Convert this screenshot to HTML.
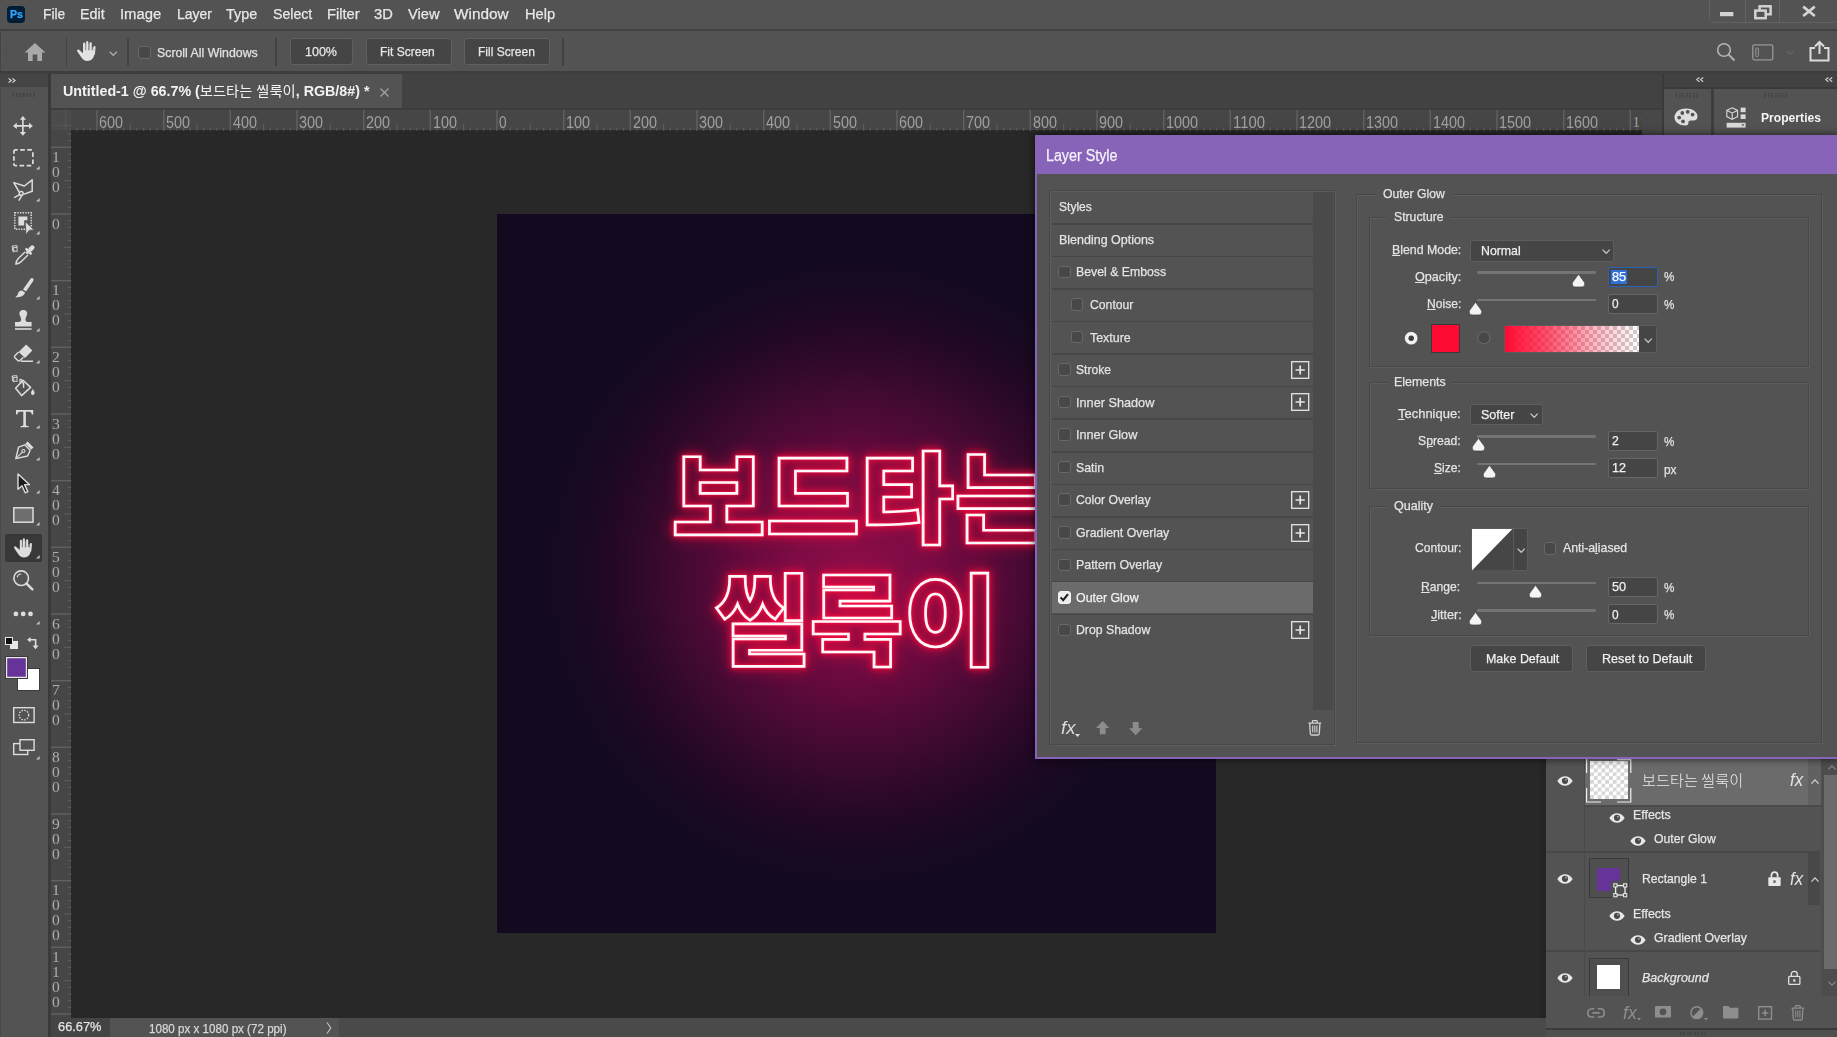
<!DOCTYPE html>
<html lang="en">
<head>
<meta charset="utf-8">
<title>Photoshop - Layer Style</title>
<style>
*{box-sizing:border-box;margin:0;padding:0}
html,body{width:1837px;height:1037px;overflow:hidden;background:#535353}
body{position:relative;font-family:"Liberation Sans","Noto Sans CJK KR",sans-serif;font-size:13px;color:#e0e0e0}
.abs{position:absolute}
.t{position:absolute;white-space:nowrap;transform-origin:0 50%;display:block;-webkit-text-stroke:0.25px currentColor}
svg{position:absolute;overflow:visible}
.btn{position:absolute;background:#454545;border:1px solid #606060;border-radius:3px}
.vsep{position:absolute;width:1px;background:#424242}
.cb{position:absolute;width:13px;height:13px;background:#484848;border:1px solid #686868;border-radius:3px}
.inp{position:absolute;background:#454545;border:1px solid #666;border-radius:2px}
.fs{position:absolute;border:1px solid #484848;box-shadow:1px 1px 0 #5d5d5d, inset 1px 1px 0 #5d5d5d}
.fsl{position:absolute;background:#535353;height:12px}
u{text-decoration:underline;text-underline-offset:1px}
</style>
</head>
<body>

<!-- p_top -->
<div class="abs" style="left:0px;top:0px;width:1837px;height:29px;background:#535353;"></div>
<div class="abs" style="left:0px;top:29px;width:1837px;height:2px;background:#414141;"></div>
<div class="abs" style="left:7px;top:6px;width:18px;height:17px;background:#001e36;border-radius:4px;"></div>
<span class="t" style="left:9.5px;top:7.10px;height:15px;line-height:15px;font-size:10.5px;font-weight:bold;color:#31a8ff;transform:scaleX(1.0122);">Ps</span>
<span class="t" style="left:43.3px;top:3.10px;height:22px;line-height:22px;font-size:15.5px;color:#e8e8e8;transform:scaleX(0.8886);">File</span>
<span class="t" style="left:80.3px;top:3.10px;height:22px;line-height:22px;font-size:15.5px;color:#e8e8e8;transform:scaleX(0.9244);">Edit</span>
<span class="t" style="left:120.3px;top:3.10px;height:22px;line-height:22px;font-size:15.5px;color:#e8e8e8;transform:scaleX(0.9561);">Image</span>
<span class="t" style="left:176.5px;top:3.10px;height:22px;line-height:22px;font-size:15.5px;color:#e8e8e8;transform:scaleX(0.9025);">Layer</span>
<span class="t" style="left:226.3px;top:3.10px;height:22px;line-height:22px;font-size:15.5px;color:#e8e8e8;transform:scaleX(0.9283);">Type</span>
<span class="t" style="left:273px;top:3.10px;height:22px;line-height:22px;font-size:15.5px;color:#e8e8e8;transform:scaleX(0.9120);">Select</span>
<span class="t" style="left:327px;top:3.10px;height:22px;line-height:22px;font-size:15.5px;color:#e8e8e8;transform:scaleX(0.9491);">Filter</span>
<span class="t" style="left:374px;top:3.10px;height:22px;line-height:22px;font-size:15.5px;color:#e8e8e8;transform:scaleX(0.9481);">3D</span>
<span class="t" style="left:408px;top:3.10px;height:22px;line-height:22px;font-size:15.5px;color:#e8e8e8;transform:scaleX(0.9451);">View</span>
<span class="t" style="left:454.2px;top:3.10px;height:22px;line-height:22px;font-size:15.5px;color:#e8e8e8;transform:scaleX(0.9902);">Window</span>
<span class="t" style="left:524.8px;top:3.10px;height:22px;line-height:22px;font-size:15.5px;color:#e8e8e8;transform:scaleX(0.9470);">Help</span>
<div class="abs" style="left:1709.4px;top:-2px;width:130px;height:25px;border:1px solid #626262;border-radius:0 0 6px 6px;"></div>
<div class="abs" style="left:1745px;top:0px;width:1px;height:22px;background:#626262;"></div>
<div class="abs" style="left:1778.6px;top:0px;width:1px;height:22px;background:#626262;"></div>
<svg style="left:1720.3px;top:12.3px;" width="13.4" height="4.2" viewBox="0 0 13.4 4.2"><rect width="13.4" height="4.2" fill="#d2d2d2"/></svg>
<svg style="left:1753.5px;top:4.5px;" width="18" height="14.6" viewBox="0 0 18 14.6"><rect x="5.6" y="1.3" width="11" height="8" fill="none" stroke="#d2d2d2" stroke-width="2.5"/><rect x="1.3" y="5.6" width="10.4" height="7.6" fill="#535353" stroke="#d2d2d2" stroke-width="2.5"/></svg>
<svg style="left:1802.4px;top:6.3px;" width="14" height="10.6" viewBox="0 0 14 10.6"><path d="M1.2 0.6 L12.8 10 M12.8 0.6 L1.2 10" stroke="#d2d2d2" stroke-width="2.7" fill="none"/></svg>
<div class="abs" style="left:0px;top:31px;width:1837px;height:41px;background:#535353;"></div>
<div class="abs" style="left:0px;top:31px;width:1px;height:41px;background:#444;"></div>
<div class="abs" style="left:0px;top:71px;width:1837px;height:3px;background:#3e3e3e;"></div>
<div class="abs" style="left:6px;top:39px;width:1px;height:24px;background:repeating-linear-gradient(#424242 0 1px,transparent 1px 3px);"></div>
<svg style="left:24px;top:42px;" width="22" height="20" viewBox="0 0 22 20"><path d="M11 1 L21.5 10.5 H18 V19 H13.3 V12.5 H8.7 V19 H4 V10.5 H0.5 Z" fill="#a9a9a9"/></svg>
<div class="vsep" style="left:65.5px;top:38px;height:28px;width:1.3px"></div>
<svg style="left:77px;top:41px;" width="18.3" height="20" viewBox="0 0 18.3 20"><g fill="#e2e2e2"><rect x="6.05" y="1.45" width="2.15" height="12" rx="1.07"/><rect x="9.15" y="0" width="2.15" height="12" rx="1.07"/><rect x="12.55" y="1.15" width="2.15" height="12" rx="1.07"/><rect x="15.85" y="5" width="2.2" height="9" rx="1.1" transform="rotate(5 16.9 12)"/><path d="M1.7 8.6 L6.05 12.2 V9.3 H17.7 L17.2 13.8 C16.8 17.6 14 19.9 10.6 19.9 C7.6 19.9 5.8 18.4 4.3 16.2 L0.3 10.4 C-0.4 9 0.8 7.9 1.7 8.6 Z"/></g><g fill="#e2e2e2" opacity=".42"><rect x="8.2" y="3" width="0.95" height="6.4"/><rect x="11.3" y="3" width="1.25" height="6.4"/><rect x="14.7" y="6.2" width="1.2" height="3.2"/></g></svg>
<svg style="left:109px;top:51px;" width="9" height="6" viewBox="0 0 9 6"><path d="M0.7 0.7 L4.3 4.3 L7.9 0.7" stroke="#ababab" stroke-width="1.3" fill="none"/></svg>
<div class="vsep" style="left:127.3px;top:38px;height:28px;width:1.3px"></div>
<div class="cb" style="left:138px;top:46px"></div>
<span class="t" style="left:156.5px;top:43.90px;height:18px;line-height:18px;font-size:13px;color:#e2e2e2;transform:scaleX(0.9482);">Scroll All Windows</span>
<div class="vsep" style="left:275.3px;top:38px;height:28px;width:1.3px"></div>
<div class="btn" style="left:290px;top:38px;width:62.5px;height:27px"></div>
<span class="t" style="left:305px;top:43.00px;height:18px;line-height:18px;font-size:13px;color:#e6e6e6;transform:scaleX(0.9624);">100%</span>
<div class="btn" style="left:366px;top:38px;width:85.5px;height:27px"></div>
<span class="t" style="left:380.2px;top:43.00px;height:18px;line-height:18px;font-size:13px;color:#e6e6e6;transform:scaleX(0.9249);">Fit Screen</span>
<div class="btn" style="left:464px;top:38px;width:86px;height:27px"></div>
<span class="t" style="left:478.3px;top:43.00px;height:18px;line-height:18px;font-size:13px;color:#e6e6e6;transform:scaleX(0.9280);">Fill Screen</span>
<div class="vsep" style="left:562.3px;top:38px;height:28px;width:1.3px"></div>
<svg style="left:1716px;top:42px;" width="20" height="20" viewBox="0 0 20 20"><circle cx="8" cy="8" r="6.3" fill="none" stroke="#b4b4b4" stroke-width="1.6"/><path d="M12.6 12.6 L18.5 18.5" stroke="#b4b4b4" stroke-width="1.8"/></svg>
<svg style="left:1752px;top:44px;" width="22" height="17" viewBox="0 0 22 17"><rect x="0.8" y="0.8" width="20" height="15" rx="1.5" fill="none" stroke="#989898" stroke-width="1.3"/><rect x="3.8" y="4" width="2.6" height="8.6" rx="1" fill="none" stroke="#989898" stroke-width="1"/></svg>
<svg style="left:1786px;top:50px;" width="9" height="6" viewBox="0 0 9 6"><path d="M0.7 0.7 L4.3 4.3 L7.9 0.7" stroke="#666" stroke-width="1.3" fill="none"/></svg>
<svg style="left:1809px;top:40px;" width="22" height="22" viewBox="0 0 22 22"><path d="M6 8 H1.5 V20.5 H19.5 V8 H15" fill="none" stroke="#dcdcdc" stroke-width="2"/><path d="M10.5 14 V2.5 M6 6.5 L10.5 2 L15 6.5" fill="none" stroke="#dcdcdc" stroke-width="2"/></svg>
<!-- p_doc -->
<div class="abs" style="left:48px;top:74px;width:1616px;height:35px;background:#424242;"></div>
<div class="abs" style="left:50px;top:74px;width:352px;height:34.5px;background:#535353;"></div>
<span class="t" style="left:63.4px;top:81.20px;height:20px;line-height:20px;font-size:14px;font-weight:bold;color:#f2f2f2;transform:scaleX(1.0194);-webkit-text-stroke:0;">Untitled-1 @ 66.7% (<span style="font-weight:400">보드타는 씰룩이</span>, RGB/8#) *</span>
<svg style="left:380px;top:87.5px;" width="9" height="9" viewBox="0 0 9 9"><path d="M0.5 0.5 L8.5 8.5 M8.5 0.5 L0.5 8.5" stroke="#a8a8a8" stroke-width="1.1" fill="none"/></svg>
<div class="abs" style="left:71px;top:130.4px;width:1571px;height:888px;background:#282828;"></div>
<div class="abs" id="art" style="left:496.8px;top:213.7px;width:719.7px;height:719.6px;overflow:hidden;background:radial-gradient(circle at 50% 50%,#8e0d48 0px,#7e0c45 60px,#6a0a3e 107px,#500a37 150px,#3f0a30 185px,#300929 215px,#250826 242px,#1b0921 270px,#160a20 292px,#140a20 312px)"><div id="neon" style="position:absolute;left:0;top:0;width:720px;height:720px;filter:drop-shadow(0 0 1.2px #ff1245) drop-shadow(0 0 3px #ff0a3e) drop-shadow(0 0 7px rgba(255,10,60,.6))"><span class="nl" style="left:174.6px;top:208.6px">보드타는</span><span class="nl" style="left:218.3px;top:330px">씰룩이</span></div></div><style>.nl{position:absolute;white-space:nowrap;font-family:"Noto Sans CJK KR",sans-serif;font-weight:900;font-size:102.5px;line-height:140px;height:140px;transform:scaleY(.97);transform-origin:0 50%;color:transparent;-webkit-text-stroke:2.7px #fff8fa;letter-spacing:0px}</style>
<div class="abs" style="left:50px;top:109.6px;width:1612px;height:20.8px;background:#464646;"></div>
<div class="abs" style="left:50px;top:108.4px;width:1612px;height:1.3px;background:#3d3d3d;"></div>
<div class="abs" style="left:1642px;top:109.6px;width:20px;height:909px;background:#484848;"></div>
<svg style="left:0px;top:109.6px;" width="1642" height="21" viewBox="0 0 1642 21"><g fill="#616161"><rect x="76.5" y="17.6" width="1" height="3.2"/><rect x="83.2" y="17.6" width="1" height="3.2"/><rect x="89.8" y="17.6" width="1" height="3.2"/><rect x="96.3" y="0" width="1.4" height="20.8"/><rect x="103.2" y="17.6" width="1" height="3.2"/><rect x="109.8" y="17.6" width="1" height="3.2"/><rect x="116.5" y="17.6" width="1" height="3.2"/><rect x="123.2" y="17.6" width="1" height="3.2"/><rect x="129.8" y="14" width="1" height="6.8"/><rect x="136.5" y="17.6" width="1" height="3.2"/><rect x="143.2" y="17.6" width="1" height="3.2"/><rect x="149.8" y="17.6" width="1" height="3.2"/><rect x="156.5" y="17.6" width="1" height="3.2"/><rect x="163.0" y="0" width="1.4" height="20.8"/><rect x="169.8" y="17.6" width="1" height="3.2"/><rect x="176.5" y="17.6" width="1" height="3.2"/><rect x="183.2" y="17.6" width="1" height="3.2"/><rect x="189.8" y="17.6" width="1" height="3.2"/><rect x="196.5" y="14" width="1" height="6.8"/><rect x="203.2" y="17.6" width="1" height="3.2"/><rect x="209.8" y="17.6" width="1" height="3.2"/><rect x="216.5" y="17.6" width="1" height="3.2"/><rect x="223.2" y="17.6" width="1" height="3.2"/><rect x="229.6" y="0" width="1.4" height="20.8"/><rect x="236.5" y="17.6" width="1" height="3.2"/><rect x="243.2" y="17.6" width="1" height="3.2"/><rect x="249.8" y="17.6" width="1" height="3.2"/><rect x="256.5" y="17.6" width="1" height="3.2"/><rect x="263.2" y="14" width="1" height="6.8"/><rect x="269.8" y="17.6" width="1" height="3.2"/><rect x="276.5" y="17.6" width="1" height="3.2"/><rect x="283.2" y="17.6" width="1" height="3.2"/><rect x="289.8" y="17.6" width="1" height="3.2"/><rect x="296.3" y="0" width="1.4" height="20.8"/><rect x="303.2" y="17.6" width="1" height="3.2"/><rect x="309.8" y="17.6" width="1" height="3.2"/><rect x="316.5" y="17.6" width="1" height="3.2"/><rect x="323.2" y="17.6" width="1" height="3.2"/><rect x="329.8" y="14" width="1" height="6.8"/><rect x="336.5" y="17.6" width="1" height="3.2"/><rect x="343.2" y="17.6" width="1" height="3.2"/><rect x="349.8" y="17.6" width="1" height="3.2"/><rect x="356.5" y="17.6" width="1" height="3.2"/><rect x="363.0" y="0" width="1.4" height="20.8"/><rect x="369.8" y="17.6" width="1" height="3.2"/><rect x="376.5" y="17.6" width="1" height="3.2"/><rect x="383.2" y="17.6" width="1" height="3.2"/><rect x="389.8" y="17.6" width="1" height="3.2"/><rect x="396.5" y="14" width="1" height="6.8"/><rect x="403.2" y="17.6" width="1" height="3.2"/><rect x="409.8" y="17.6" width="1" height="3.2"/><rect x="416.5" y="17.6" width="1" height="3.2"/><rect x="423.2" y="17.6" width="1" height="3.2"/><rect x="429.6" y="0" width="1.4" height="20.8"/><rect x="436.5" y="17.6" width="1" height="3.2"/><rect x="443.2" y="17.6" width="1" height="3.2"/><rect x="449.8" y="17.6" width="1" height="3.2"/><rect x="456.5" y="17.6" width="1" height="3.2"/><rect x="463.2" y="14" width="1" height="6.8"/><rect x="469.8" y="17.6" width="1" height="3.2"/><rect x="476.5" y="17.6" width="1" height="3.2"/><rect x="483.2" y="17.6" width="1" height="3.2"/><rect x="489.8" y="17.6" width="1" height="3.2"/><rect x="496.3" y="0" width="1.4" height="20.8"/><rect x="503.2" y="17.6" width="1" height="3.2"/><rect x="509.8" y="17.6" width="1" height="3.2"/><rect x="516.5" y="17.6" width="1" height="3.2"/><rect x="523.2" y="17.6" width="1" height="3.2"/><rect x="529.8" y="14" width="1" height="6.8"/><rect x="536.5" y="17.6" width="1" height="3.2"/><rect x="543.2" y="17.6" width="1" height="3.2"/><rect x="549.8" y="17.6" width="1" height="3.2"/><rect x="556.5" y="17.6" width="1" height="3.2"/><rect x="563.0" y="0" width="1.4" height="20.8"/><rect x="569.8" y="17.6" width="1" height="3.2"/><rect x="576.5" y="17.6" width="1" height="3.2"/><rect x="583.2" y="17.6" width="1" height="3.2"/><rect x="589.8" y="17.6" width="1" height="3.2"/><rect x="596.5" y="14" width="1" height="6.8"/><rect x="603.2" y="17.6" width="1" height="3.2"/><rect x="609.8" y="17.6" width="1" height="3.2"/><rect x="616.5" y="17.6" width="1" height="3.2"/><rect x="623.2" y="17.6" width="1" height="3.2"/><rect x="629.6" y="0" width="1.4" height="20.8"/><rect x="636.5" y="17.6" width="1" height="3.2"/><rect x="643.2" y="17.6" width="1" height="3.2"/><rect x="649.8" y="17.6" width="1" height="3.2"/><rect x="656.5" y="17.6" width="1" height="3.2"/><rect x="663.2" y="14" width="1" height="6.8"/><rect x="669.8" y="17.6" width="1" height="3.2"/><rect x="676.5" y="17.6" width="1" height="3.2"/><rect x="683.2" y="17.6" width="1" height="3.2"/><rect x="689.8" y="17.6" width="1" height="3.2"/><rect x="696.3" y="0" width="1.4" height="20.8"/><rect x="703.2" y="17.6" width="1" height="3.2"/><rect x="709.8" y="17.6" width="1" height="3.2"/><rect x="716.5" y="17.6" width="1" height="3.2"/><rect x="723.2" y="17.6" width="1" height="3.2"/><rect x="729.8" y="14" width="1" height="6.8"/><rect x="736.5" y="17.6" width="1" height="3.2"/><rect x="743.2" y="17.6" width="1" height="3.2"/><rect x="749.8" y="17.6" width="1" height="3.2"/><rect x="756.5" y="17.6" width="1" height="3.2"/><rect x="763.0" y="0" width="1.4" height="20.8"/><rect x="769.8" y="17.6" width="1" height="3.2"/><rect x="776.5" y="17.6" width="1" height="3.2"/><rect x="783.2" y="17.6" width="1" height="3.2"/><rect x="789.8" y="17.6" width="1" height="3.2"/><rect x="796.5" y="14" width="1" height="6.8"/><rect x="803.2" y="17.6" width="1" height="3.2"/><rect x="809.8" y="17.6" width="1" height="3.2"/><rect x="816.5" y="17.6" width="1" height="3.2"/><rect x="823.2" y="17.6" width="1" height="3.2"/><rect x="829.6" y="0" width="1.4" height="20.8"/><rect x="836.5" y="17.6" width="1" height="3.2"/><rect x="843.2" y="17.6" width="1" height="3.2"/><rect x="849.8" y="17.6" width="1" height="3.2"/><rect x="856.5" y="17.6" width="1" height="3.2"/><rect x="863.2" y="14" width="1" height="6.8"/><rect x="869.8" y="17.6" width="1" height="3.2"/><rect x="876.5" y="17.6" width="1" height="3.2"/><rect x="883.2" y="17.6" width="1" height="3.2"/><rect x="889.8" y="17.6" width="1" height="3.2"/><rect x="896.3" y="0" width="1.4" height="20.8"/><rect x="903.2" y="17.6" width="1" height="3.2"/><rect x="909.8" y="17.6" width="1" height="3.2"/><rect x="916.5" y="17.6" width="1" height="3.2"/><rect x="923.2" y="17.6" width="1" height="3.2"/><rect x="929.8" y="14" width="1" height="6.8"/><rect x="936.5" y="17.6" width="1" height="3.2"/><rect x="943.2" y="17.6" width="1" height="3.2"/><rect x="949.8" y="17.6" width="1" height="3.2"/><rect x="956.5" y="17.6" width="1" height="3.2"/><rect x="963.0" y="0" width="1.4" height="20.8"/><rect x="969.8" y="17.6" width="1" height="3.2"/><rect x="976.5" y="17.6" width="1" height="3.2"/><rect x="983.2" y="17.6" width="1" height="3.2"/><rect x="989.8" y="17.6" width="1" height="3.2"/><rect x="996.5" y="14" width="1" height="6.8"/><rect x="1003.2" y="17.6" width="1" height="3.2"/><rect x="1009.8" y="17.6" width="1" height="3.2"/><rect x="1016.5" y="17.6" width="1" height="3.2"/><rect x="1023.2" y="17.6" width="1" height="3.2"/><rect x="1029.6" y="0" width="1.4" height="20.8"/><rect x="1036.5" y="17.6" width="1" height="3.2"/><rect x="1043.2" y="17.6" width="1" height="3.2"/><rect x="1049.8" y="17.6" width="1" height="3.2"/><rect x="1056.5" y="17.6" width="1" height="3.2"/><rect x="1063.2" y="14" width="1" height="6.8"/><rect x="1069.8" y="17.6" width="1" height="3.2"/><rect x="1076.5" y="17.6" width="1" height="3.2"/><rect x="1083.2" y="17.6" width="1" height="3.2"/><rect x="1089.8" y="17.6" width="1" height="3.2"/><rect x="1096.3" y="0" width="1.4" height="20.8"/><rect x="1103.2" y="17.6" width="1" height="3.2"/><rect x="1109.8" y="17.6" width="1" height="3.2"/><rect x="1116.5" y="17.6" width="1" height="3.2"/><rect x="1123.2" y="17.6" width="1" height="3.2"/><rect x="1129.8" y="14" width="1" height="6.8"/><rect x="1136.5" y="17.6" width="1" height="3.2"/><rect x="1143.2" y="17.6" width="1" height="3.2"/><rect x="1149.8" y="17.6" width="1" height="3.2"/><rect x="1156.5" y="17.6" width="1" height="3.2"/><rect x="1163.0" y="0" width="1.4" height="20.8"/><rect x="1169.8" y="17.6" width="1" height="3.2"/><rect x="1176.5" y="17.6" width="1" height="3.2"/><rect x="1183.2" y="17.6" width="1" height="3.2"/><rect x="1189.8" y="17.6" width="1" height="3.2"/><rect x="1196.5" y="14" width="1" height="6.8"/><rect x="1203.2" y="17.6" width="1" height="3.2"/><rect x="1209.8" y="17.6" width="1" height="3.2"/><rect x="1216.5" y="17.6" width="1" height="3.2"/><rect x="1223.2" y="17.6" width="1" height="3.2"/><rect x="1229.6" y="0" width="1.4" height="20.8"/><rect x="1236.5" y="17.6" width="1" height="3.2"/><rect x="1243.2" y="17.6" width="1" height="3.2"/><rect x="1249.8" y="17.6" width="1" height="3.2"/><rect x="1256.5" y="17.6" width="1" height="3.2"/><rect x="1263.2" y="14" width="1" height="6.8"/><rect x="1269.8" y="17.6" width="1" height="3.2"/><rect x="1276.5" y="17.6" width="1" height="3.2"/><rect x="1283.2" y="17.6" width="1" height="3.2"/><rect x="1289.8" y="17.6" width="1" height="3.2"/><rect x="1296.3" y="0" width="1.4" height="20.8"/><rect x="1303.2" y="17.6" width="1" height="3.2"/><rect x="1309.8" y="17.6" width="1" height="3.2"/><rect x="1316.5" y="17.6" width="1" height="3.2"/><rect x="1323.2" y="17.6" width="1" height="3.2"/><rect x="1329.8" y="14" width="1" height="6.8"/><rect x="1336.5" y="17.6" width="1" height="3.2"/><rect x="1343.2" y="17.6" width="1" height="3.2"/><rect x="1349.8" y="17.6" width="1" height="3.2"/><rect x="1356.5" y="17.6" width="1" height="3.2"/><rect x="1363.0" y="0" width="1.4" height="20.8"/><rect x="1369.8" y="17.6" width="1" height="3.2"/><rect x="1376.5" y="17.6" width="1" height="3.2"/><rect x="1383.2" y="17.6" width="1" height="3.2"/><rect x="1389.8" y="17.6" width="1" height="3.2"/><rect x="1396.5" y="14" width="1" height="6.8"/><rect x="1403.2" y="17.6" width="1" height="3.2"/><rect x="1409.8" y="17.6" width="1" height="3.2"/><rect x="1416.5" y="17.6" width="1" height="3.2"/><rect x="1423.2" y="17.6" width="1" height="3.2"/><rect x="1429.6" y="0" width="1.4" height="20.8"/><rect x="1436.5" y="17.6" width="1" height="3.2"/><rect x="1443.2" y="17.6" width="1" height="3.2"/><rect x="1449.8" y="17.6" width="1" height="3.2"/><rect x="1456.5" y="17.6" width="1" height="3.2"/><rect x="1463.2" y="14" width="1" height="6.8"/><rect x="1469.8" y="17.6" width="1" height="3.2"/><rect x="1476.5" y="17.6" width="1" height="3.2"/><rect x="1483.2" y="17.6" width="1" height="3.2"/><rect x="1489.8" y="17.6" width="1" height="3.2"/><rect x="1496.3" y="0" width="1.4" height="20.8"/><rect x="1503.2" y="17.6" width="1" height="3.2"/><rect x="1509.8" y="17.6" width="1" height="3.2"/><rect x="1516.5" y="17.6" width="1" height="3.2"/><rect x="1523.2" y="17.6" width="1" height="3.2"/><rect x="1529.8" y="14" width="1" height="6.8"/><rect x="1536.5" y="17.6" width="1" height="3.2"/><rect x="1543.2" y="17.6" width="1" height="3.2"/><rect x="1549.8" y="17.6" width="1" height="3.2"/><rect x="1556.5" y="17.6" width="1" height="3.2"/><rect x="1563.0" y="0" width="1.4" height="20.8"/><rect x="1569.8" y="17.6" width="1" height="3.2"/><rect x="1576.5" y="17.6" width="1" height="3.2"/><rect x="1583.2" y="17.6" width="1" height="3.2"/><rect x="1589.8" y="17.6" width="1" height="3.2"/><rect x="1596.5" y="14" width="1" height="6.8"/><rect x="1603.2" y="17.6" width="1" height="3.2"/><rect x="1609.8" y="17.6" width="1" height="3.2"/><rect x="1616.5" y="17.6" width="1" height="3.2"/><rect x="1623.2" y="17.6" width="1" height="3.2"/><rect x="1629.6" y="0" width="1.4" height="20.8"/><rect x="1636.5" y="17.6" width="1" height="3.2"/></g></svg>
<span class="t" style="left:99.39979999999994px;top:112.10px;height:22px;line-height:22px;font-size:16px;color:#a0a0a0;transform:scaleX(0.8988);-webkit-text-stroke:0;">600</span>
<span class="t" style="left:166.0665px;top:112.10px;height:22px;line-height:22px;font-size:16px;color:#a0a0a0;transform:scaleX(0.8988);-webkit-text-stroke:0;">500</span>
<span class="t" style="left:232.73319999999998px;top:112.10px;height:22px;line-height:22px;font-size:16px;color:#a0a0a0;transform:scaleX(0.8988);-webkit-text-stroke:0;">400</span>
<span class="t" style="left:299.39989999999995px;top:112.10px;height:22px;line-height:22px;font-size:16px;color:#a0a0a0;transform:scaleX(0.8988);-webkit-text-stroke:0;">300</span>
<span class="t" style="left:366.0666px;top:112.10px;height:22px;line-height:22px;font-size:16px;color:#a0a0a0;transform:scaleX(0.8988);-webkit-text-stroke:0;">200</span>
<span class="t" style="left:432.7333px;top:112.10px;height:22px;line-height:22px;font-size:16px;color:#a0a0a0;transform:scaleX(0.8988);-webkit-text-stroke:0;">100</span>
<span class="t" style="left:499.4px;top:112.10px;height:22px;line-height:22px;font-size:16px;color:#a0a0a0;transform:scaleX(0.8533);-webkit-text-stroke:0;">0</span>
<span class="t" style="left:566.0667px;top:112.10px;height:22px;line-height:22px;font-size:16px;color:#a0a0a0;transform:scaleX(0.8988);-webkit-text-stroke:0;">100</span>
<span class="t" style="left:632.7334px;top:112.10px;height:22px;line-height:22px;font-size:16px;color:#a0a0a0;transform:scaleX(0.8988);-webkit-text-stroke:0;">200</span>
<span class="t" style="left:699.4001px;top:112.10px;height:22px;line-height:22px;font-size:16px;color:#a0a0a0;transform:scaleX(0.8988);-webkit-text-stroke:0;">300</span>
<span class="t" style="left:766.0668px;top:112.10px;height:22px;line-height:22px;font-size:16px;color:#a0a0a0;transform:scaleX(0.8988);-webkit-text-stroke:0;">400</span>
<span class="t" style="left:832.7334999999999px;top:112.10px;height:22px;line-height:22px;font-size:16px;color:#a0a0a0;transform:scaleX(0.8988);-webkit-text-stroke:0;">500</span>
<span class="t" style="left:899.4002px;top:112.10px;height:22px;line-height:22px;font-size:16px;color:#a0a0a0;transform:scaleX(0.8988);-webkit-text-stroke:0;">600</span>
<span class="t" style="left:966.0669px;top:112.10px;height:22px;line-height:22px;font-size:16px;color:#a0a0a0;transform:scaleX(0.8988);-webkit-text-stroke:0;">700</span>
<span class="t" style="left:1032.7336px;top:112.10px;height:22px;line-height:22px;font-size:16px;color:#a0a0a0;transform:scaleX(0.8988);-webkit-text-stroke:0;">800</span>
<span class="t" style="left:1099.4003000000002px;top:112.10px;height:22px;line-height:22px;font-size:16px;color:#a0a0a0;transform:scaleX(0.8988);-webkit-text-stroke:0;">900</span>
<span class="t" style="left:1166.067px;top:112.10px;height:22px;line-height:22px;font-size:16px;color:#a0a0a0;transform:scaleX(0.8990);-webkit-text-stroke:0;">1000</span>
<span class="t" style="left:1232.7337000000002px;top:112.10px;height:22px;line-height:22px;font-size:16px;color:#a0a0a0;transform:scaleX(0.9301);-webkit-text-stroke:0;">1100</span>
<span class="t" style="left:1299.4004000000002px;top:112.10px;height:22px;line-height:22px;font-size:16px;color:#a0a0a0;transform:scaleX(0.8990);-webkit-text-stroke:0;">1200</span>
<span class="t" style="left:1366.0671000000002px;top:112.10px;height:22px;line-height:22px;font-size:16px;color:#a0a0a0;transform:scaleX(0.8990);-webkit-text-stroke:0;">1300</span>
<span class="t" style="left:1432.7338000000002px;top:112.10px;height:22px;line-height:22px;font-size:16px;color:#a0a0a0;transform:scaleX(0.8990);-webkit-text-stroke:0;">1400</span>
<span class="t" style="left:1499.4005000000002px;top:112.10px;height:22px;line-height:22px;font-size:16px;color:#a0a0a0;transform:scaleX(0.8990);-webkit-text-stroke:0;">1500</span>
<span class="t" style="left:1566.0672000000002px;top:112.10px;height:22px;line-height:22px;font-size:16px;color:#a0a0a0;transform:scaleX(0.8990);-webkit-text-stroke:0;">1600</span>
<div class="abs" style="left:1631.3339px;top:110px;width:10px;height:20px;overflow:hidden;"><span class="t" style="left:1.2px;top:2.10px;height:21px;line-height:21px;font-size:15px;font-family:'Liberation Serif',serif;color:#a0a0a0;-webkit-text-stroke:0;">1700</span></div>
<div class="abs" style="left:50px;top:109.6px;width:21.2px;height:909px;background:#464646;"></div>
<svg style="left:50px;top:-0.3px;" width="22" height="1018" viewBox="0 0 22 1018"><g fill="#616161"><rect y="133.5" x="18" height="1" width="3.2"/><rect y="140.2" x="18" height="1" width="3.2"/><rect y="146.6" x="0" height="1.4" width="21.2"/><rect y="153.5" x="18" height="1" width="3.2"/><rect y="160.2" x="18" height="1" width="3.2"/><rect y="166.8" x="18" height="1" width="3.2"/><rect y="173.5" x="18" height="1" width="3.2"/><rect y="180.2" x="14" height="1" width="7.2"/><rect y="186.8" x="18" height="1" width="3.2"/><rect y="193.5" x="18" height="1" width="3.2"/><rect y="200.2" x="18" height="1" width="3.2"/><rect y="206.8" x="18" height="1" width="3.2"/><rect y="213.3" x="0" height="1.4" width="21.2"/><rect y="220.2" x="18" height="1" width="3.2"/><rect y="226.8" x="18" height="1" width="3.2"/><rect y="233.5" x="18" height="1" width="3.2"/><rect y="240.2" x="18" height="1" width="3.2"/><rect y="246.8" x="14" height="1" width="7.2"/><rect y="253.5" x="18" height="1" width="3.2"/><rect y="260.2" x="18" height="1" width="3.2"/><rect y="266.8" x="18" height="1" width="3.2"/><rect y="273.5" x="18" height="1" width="3.2"/><rect y="280.0" x="0" height="1.4" width="21.2"/><rect y="286.8" x="18" height="1" width="3.2"/><rect y="293.5" x="18" height="1" width="3.2"/><rect y="300.2" x="18" height="1" width="3.2"/><rect y="306.8" x="18" height="1" width="3.2"/><rect y="313.5" x="14" height="1" width="7.2"/><rect y="320.2" x="18" height="1" width="3.2"/><rect y="326.8" x="18" height="1" width="3.2"/><rect y="333.5" x="18" height="1" width="3.2"/><rect y="340.2" x="18" height="1" width="3.2"/><rect y="346.6" x="0" height="1.4" width="21.2"/><rect y="353.5" x="18" height="1" width="3.2"/><rect y="360.2" x="18" height="1" width="3.2"/><rect y="366.8" x="18" height="1" width="3.2"/><rect y="373.5" x="18" height="1" width="3.2"/><rect y="380.2" x="14" height="1" width="7.2"/><rect y="386.8" x="18" height="1" width="3.2"/><rect y="393.5" x="18" height="1" width="3.2"/><rect y="400.2" x="18" height="1" width="3.2"/><rect y="406.8" x="18" height="1" width="3.2"/><rect y="413.3" x="0" height="1.4" width="21.2"/><rect y="420.2" x="18" height="1" width="3.2"/><rect y="426.8" x="18" height="1" width="3.2"/><rect y="433.5" x="18" height="1" width="3.2"/><rect y="440.2" x="18" height="1" width="3.2"/><rect y="446.8" x="14" height="1" width="7.2"/><rect y="453.5" x="18" height="1" width="3.2"/><rect y="460.2" x="18" height="1" width="3.2"/><rect y="466.8" x="18" height="1" width="3.2"/><rect y="473.5" x="18" height="1" width="3.2"/><rect y="480.0" x="0" height="1.4" width="21.2"/><rect y="486.8" x="18" height="1" width="3.2"/><rect y="493.5" x="18" height="1" width="3.2"/><rect y="500.2" x="18" height="1" width="3.2"/><rect y="506.8" x="18" height="1" width="3.2"/><rect y="513.5" x="14" height="1" width="7.2"/><rect y="520.2" x="18" height="1" width="3.2"/><rect y="526.8" x="18" height="1" width="3.2"/><rect y="533.5" x="18" height="1" width="3.2"/><rect y="540.2" x="18" height="1" width="3.2"/><rect y="546.6" x="0" height="1.4" width="21.2"/><rect y="553.5" x="18" height="1" width="3.2"/><rect y="560.2" x="18" height="1" width="3.2"/><rect y="566.8" x="18" height="1" width="3.2"/><rect y="573.5" x="18" height="1" width="3.2"/><rect y="580.2" x="14" height="1" width="7.2"/><rect y="586.8" x="18" height="1" width="3.2"/><rect y="593.5" x="18" height="1" width="3.2"/><rect y="600.2" x="18" height="1" width="3.2"/><rect y="606.8" x="18" height="1" width="3.2"/><rect y="613.3" x="0" height="1.4" width="21.2"/><rect y="620.2" x="18" height="1" width="3.2"/><rect y="626.8" x="18" height="1" width="3.2"/><rect y="633.5" x="18" height="1" width="3.2"/><rect y="640.2" x="18" height="1" width="3.2"/><rect y="646.8" x="14" height="1" width="7.2"/><rect y="653.5" x="18" height="1" width="3.2"/><rect y="660.2" x="18" height="1" width="3.2"/><rect y="666.8" x="18" height="1" width="3.2"/><rect y="673.5" x="18" height="1" width="3.2"/><rect y="680.0" x="0" height="1.4" width="21.2"/><rect y="686.8" x="18" height="1" width="3.2"/><rect y="693.5" x="18" height="1" width="3.2"/><rect y="700.2" x="18" height="1" width="3.2"/><rect y="706.8" x="18" height="1" width="3.2"/><rect y="713.5" x="14" height="1" width="7.2"/><rect y="720.2" x="18" height="1" width="3.2"/><rect y="726.8" x="18" height="1" width="3.2"/><rect y="733.5" x="18" height="1" width="3.2"/><rect y="740.2" x="18" height="1" width="3.2"/><rect y="746.6" x="0" height="1.4" width="21.2"/><rect y="753.5" x="18" height="1" width="3.2"/><rect y="760.2" x="18" height="1" width="3.2"/><rect y="766.8" x="18" height="1" width="3.2"/><rect y="773.5" x="18" height="1" width="3.2"/><rect y="780.2" x="14" height="1" width="7.2"/><rect y="786.8" x="18" height="1" width="3.2"/><rect y="793.5" x="18" height="1" width="3.2"/><rect y="800.2" x="18" height="1" width="3.2"/><rect y="806.8" x="18" height="1" width="3.2"/><rect y="813.3" x="0" height="1.4" width="21.2"/><rect y="820.2" x="18" height="1" width="3.2"/><rect y="826.8" x="18" height="1" width="3.2"/><rect y="833.5" x="18" height="1" width="3.2"/><rect y="840.2" x="18" height="1" width="3.2"/><rect y="846.8" x="14" height="1" width="7.2"/><rect y="853.5" x="18" height="1" width="3.2"/><rect y="860.2" x="18" height="1" width="3.2"/><rect y="866.8" x="18" height="1" width="3.2"/><rect y="873.5" x="18" height="1" width="3.2"/><rect y="880.0" x="0" height="1.4" width="21.2"/><rect y="886.8" x="18" height="1" width="3.2"/><rect y="893.5" x="18" height="1" width="3.2"/><rect y="900.2" x="18" height="1" width="3.2"/><rect y="906.8" x="18" height="1" width="3.2"/><rect y="913.5" x="14" height="1" width="7.2"/><rect y="920.2" x="18" height="1" width="3.2"/><rect y="926.8" x="18" height="1" width="3.2"/><rect y="933.5" x="18" height="1" width="3.2"/><rect y="940.2" x="18" height="1" width="3.2"/><rect y="946.6" x="0" height="1.4" width="21.2"/><rect y="953.5" x="18" height="1" width="3.2"/><rect y="960.2" x="18" height="1" width="3.2"/><rect y="966.8" x="18" height="1" width="3.2"/><rect y="973.5" x="18" height="1" width="3.2"/><rect y="980.2" x="14" height="1" width="7.2"/><rect y="986.8" x="18" height="1" width="3.2"/><rect y="993.5" x="18" height="1" width="3.2"/><rect y="1000.2" x="18" height="1" width="3.2"/><rect y="1006.8" x="18" height="1" width="3.2"/><rect y="1013.3" x="0" height="1.4" width="21.2"/></g></svg>
<span class="t" style="left:51.6px;top:147.03px;height:21px;line-height:21px;font-size:15px;font-family:'Liberation Serif',serif;color:#adadad;transform:scaleX(1.0400);-webkit-text-stroke:0;">1</span>
<span class="t" style="left:51.6px;top:161.93px;height:21px;line-height:21px;font-size:15px;font-family:'Liberation Serif',serif;color:#adadad;transform:scaleX(1.0400);-webkit-text-stroke:0;">0</span>
<span class="t" style="left:51.6px;top:176.83px;height:21px;line-height:21px;font-size:15px;font-family:'Liberation Serif',serif;color:#adadad;transform:scaleX(1.0400);-webkit-text-stroke:0;">0</span>
<span class="t" style="left:51.6px;top:213.70px;height:21px;line-height:21px;font-size:15px;font-family:'Liberation Serif',serif;color:#adadad;transform:scaleX(1.0400);-webkit-text-stroke:0;">0</span>
<span class="t" style="left:51.6px;top:280.37px;height:21px;line-height:21px;font-size:15px;font-family:'Liberation Serif',serif;color:#adadad;transform:scaleX(1.0400);-webkit-text-stroke:0;">1</span>
<span class="t" style="left:51.6px;top:295.27px;height:21px;line-height:21px;font-size:15px;font-family:'Liberation Serif',serif;color:#adadad;transform:scaleX(1.0400);-webkit-text-stroke:0;">0</span>
<span class="t" style="left:51.6px;top:310.17px;height:21px;line-height:21px;font-size:15px;font-family:'Liberation Serif',serif;color:#adadad;transform:scaleX(1.0400);-webkit-text-stroke:0;">0</span>
<span class="t" style="left:51.6px;top:347.03px;height:21px;line-height:21px;font-size:15px;font-family:'Liberation Serif',serif;color:#adadad;transform:scaleX(1.0400);-webkit-text-stroke:0;">2</span>
<span class="t" style="left:51.6px;top:361.93px;height:21px;line-height:21px;font-size:15px;font-family:'Liberation Serif',serif;color:#adadad;transform:scaleX(1.0400);-webkit-text-stroke:0;">0</span>
<span class="t" style="left:51.6px;top:376.83px;height:21px;line-height:21px;font-size:15px;font-family:'Liberation Serif',serif;color:#adadad;transform:scaleX(1.0400);-webkit-text-stroke:0;">0</span>
<span class="t" style="left:51.6px;top:413.70px;height:21px;line-height:21px;font-size:15px;font-family:'Liberation Serif',serif;color:#adadad;transform:scaleX(1.0400);-webkit-text-stroke:0;">3</span>
<span class="t" style="left:51.6px;top:428.60px;height:21px;line-height:21px;font-size:15px;font-family:'Liberation Serif',serif;color:#adadad;transform:scaleX(1.0400);-webkit-text-stroke:0;">0</span>
<span class="t" style="left:51.6px;top:443.50px;height:21px;line-height:21px;font-size:15px;font-family:'Liberation Serif',serif;color:#adadad;transform:scaleX(1.0400);-webkit-text-stroke:0;">0</span>
<span class="t" style="left:51.6px;top:480.37px;height:21px;line-height:21px;font-size:15px;font-family:'Liberation Serif',serif;color:#adadad;transform:scaleX(1.0400);-webkit-text-stroke:0;">4</span>
<span class="t" style="left:51.6px;top:495.27px;height:21px;line-height:21px;font-size:15px;font-family:'Liberation Serif',serif;color:#adadad;transform:scaleX(1.0400);-webkit-text-stroke:0;">0</span>
<span class="t" style="left:51.6px;top:510.17px;height:21px;line-height:21px;font-size:15px;font-family:'Liberation Serif',serif;color:#adadad;transform:scaleX(1.0400);-webkit-text-stroke:0;">0</span>
<span class="t" style="left:51.6px;top:547.03px;height:21px;line-height:21px;font-size:15px;font-family:'Liberation Serif',serif;color:#adadad;transform:scaleX(1.0400);-webkit-text-stroke:0;">5</span>
<span class="t" style="left:51.6px;top:561.93px;height:21px;line-height:21px;font-size:15px;font-family:'Liberation Serif',serif;color:#adadad;transform:scaleX(1.0400);-webkit-text-stroke:0;">0</span>
<span class="t" style="left:51.6px;top:576.83px;height:21px;line-height:21px;font-size:15px;font-family:'Liberation Serif',serif;color:#adadad;transform:scaleX(1.0400);-webkit-text-stroke:0;">0</span>
<span class="t" style="left:51.6px;top:613.70px;height:21px;line-height:21px;font-size:15px;font-family:'Liberation Serif',serif;color:#adadad;transform:scaleX(1.0400);-webkit-text-stroke:0;">6</span>
<span class="t" style="left:51.6px;top:628.60px;height:21px;line-height:21px;font-size:15px;font-family:'Liberation Serif',serif;color:#adadad;transform:scaleX(1.0400);-webkit-text-stroke:0;">0</span>
<span class="t" style="left:51.6px;top:643.50px;height:21px;line-height:21px;font-size:15px;font-family:'Liberation Serif',serif;color:#adadad;transform:scaleX(1.0400);-webkit-text-stroke:0;">0</span>
<span class="t" style="left:51.6px;top:680.37px;height:21px;line-height:21px;font-size:15px;font-family:'Liberation Serif',serif;color:#adadad;transform:scaleX(1.0400);-webkit-text-stroke:0;">7</span>
<span class="t" style="left:51.6px;top:695.27px;height:21px;line-height:21px;font-size:15px;font-family:'Liberation Serif',serif;color:#adadad;transform:scaleX(1.0400);-webkit-text-stroke:0;">0</span>
<span class="t" style="left:51.6px;top:710.17px;height:21px;line-height:21px;font-size:15px;font-family:'Liberation Serif',serif;color:#adadad;transform:scaleX(1.0400);-webkit-text-stroke:0;">0</span>
<span class="t" style="left:51.6px;top:747.03px;height:21px;line-height:21px;font-size:15px;font-family:'Liberation Serif',serif;color:#adadad;transform:scaleX(1.0400);-webkit-text-stroke:0;">8</span>
<span class="t" style="left:51.6px;top:761.93px;height:21px;line-height:21px;font-size:15px;font-family:'Liberation Serif',serif;color:#adadad;transform:scaleX(1.0400);-webkit-text-stroke:0;">0</span>
<span class="t" style="left:51.6px;top:776.83px;height:21px;line-height:21px;font-size:15px;font-family:'Liberation Serif',serif;color:#adadad;transform:scaleX(1.0400);-webkit-text-stroke:0;">0</span>
<span class="t" style="left:51.6px;top:813.70px;height:21px;line-height:21px;font-size:15px;font-family:'Liberation Serif',serif;color:#adadad;transform:scaleX(1.0400);-webkit-text-stroke:0;">9</span>
<span class="t" style="left:51.6px;top:828.60px;height:21px;line-height:21px;font-size:15px;font-family:'Liberation Serif',serif;color:#adadad;transform:scaleX(1.0400);-webkit-text-stroke:0;">0</span>
<span class="t" style="left:51.6px;top:843.50px;height:21px;line-height:21px;font-size:15px;font-family:'Liberation Serif',serif;color:#adadad;transform:scaleX(1.0400);-webkit-text-stroke:0;">0</span>
<span class="t" style="left:51.6px;top:880.37px;height:21px;line-height:21px;font-size:15px;font-family:'Liberation Serif',serif;color:#adadad;transform:scaleX(1.0400);-webkit-text-stroke:0;">1</span>
<span class="t" style="left:51.6px;top:895.27px;height:21px;line-height:21px;font-size:15px;font-family:'Liberation Serif',serif;color:#adadad;transform:scaleX(1.0400);-webkit-text-stroke:0;">0</span>
<span class="t" style="left:51.6px;top:910.17px;height:21px;line-height:21px;font-size:15px;font-family:'Liberation Serif',serif;color:#adadad;transform:scaleX(1.0400);-webkit-text-stroke:0;">0</span>
<span class="t" style="left:51.6px;top:925.07px;height:21px;line-height:21px;font-size:15px;font-family:'Liberation Serif',serif;color:#adadad;transform:scaleX(1.0400);-webkit-text-stroke:0;">0</span>
<span class="t" style="left:51.6px;top:947.03px;height:21px;line-height:21px;font-size:15px;font-family:'Liberation Serif',serif;color:#adadad;transform:scaleX(1.0400);-webkit-text-stroke:0;">1</span>
<span class="t" style="left:51.6px;top:961.93px;height:21px;line-height:21px;font-size:15px;font-family:'Liberation Serif',serif;color:#adadad;transform:scaleX(1.0400);-webkit-text-stroke:0;">1</span>
<span class="t" style="left:51.6px;top:976.83px;height:21px;line-height:21px;font-size:15px;font-family:'Liberation Serif',serif;color:#adadad;transform:scaleX(1.0400);-webkit-text-stroke:0;">0</span>
<span class="t" style="left:51.6px;top:991.73px;height:21px;line-height:21px;font-size:15px;font-family:'Liberation Serif',serif;color:#adadad;transform:scaleX(1.0400);-webkit-text-stroke:0;">0</span>
<div class="abs" style="left:50px;top:109.6px;width:21.2px;height:20.8px;background:#4b4b4b;"></div>
<div class="abs" style="left:65px;top:109.6px;width:1px;height:20.8px;background:repeating-linear-gradient(#5c5c5c 0 1px,transparent 1px 2px);"></div>
<div class="abs" style="left:50px;top:124.5px;width:21.2px;height:1px;background:repeating-linear-gradient(90deg,#5c5c5c 0 1px,transparent 1px 2px);"></div>
<div class="abs" style="left:50px;top:1018px;width:1496px;height:19px;background:#4a4a4a;"></div>
<div class="abs" style="left:50px;top:1018px;width:60px;height:19px;background:#444444;"></div>
<div class="abs" style="left:110px;top:1018px;width:229px;height:19px;background:#535353;"></div>
<span class="t" style="left:57.5px;top:1018.20px;height:18px;line-height:18px;font-size:13px;color:#e4e4e4;transform:scaleX(0.9865);">66.67%</span>
<span class="t" style="left:148.5px;top:1019.50px;height:18px;line-height:18px;font-size:12.5px;color:#d8d8d8;transform:scaleX(0.9289);">1080 px x 1080 px (72 ppi)</span>
<svg style="left:326px;top:1022px;" width="6" height="12" viewBox="0 0 6 12"><path d="M1 0.5 L4.8 6 L1 11.5" stroke="#c8c8c8" stroke-width="1.1" fill="none"/></svg>
<div class="abs" style="left:1662px;top:74px;width:2px;height:61.5px;background:#3a3a3a;"></div>
<div class="abs" style="left:1664px;top:73.6px;width:173px;height:13.8px;background:#424242;"></div>
<div class="abs" style="left:1664px;top:87.4px;width:173px;height:1.3px;background:#3a3a3a;"></div>
<div class="abs" style="left:1664px;top:88.6px;width:46.5px;height:47px;background:#535353;"></div>
<div class="abs" style="left:1710.5px;top:88.6px;width:3.3px;height:47px;background:#3e3e3e;"></div>
<div class="abs" style="left:1713.8px;top:88.6px;width:124px;height:47px;background:#535353;"></div>
<svg style="left:1696.2px;top:77.4px;" width="8" height="5.4" viewBox="0 0 8 5.4"><path d="M3.4 0.5 L0.8 2.6 L3.4 4.7 M7.2 0.5 L4.6 2.6 L7.2 4.7" stroke="#d0d0d0" stroke-width="1.2" fill="none"/></svg>
<svg style="left:1825.3px;top:77.4px;" width="8" height="5.4" viewBox="0 0 8 5.4"><path d="M3.4 0.5 L0.8 2.6 L3.4 4.7 M7.2 0.5 L4.6 2.6 L7.2 4.7" stroke="#d0d0d0" stroke-width="1.2" fill="none"/></svg>
<div class="abs" style="left:1675px;top:93px;width:24.5px;height:4.5px;background:repeating-linear-gradient(90deg,#494949 0 2px,transparent 2px 3.5px);"></div>
<div class="abs" style="left:1763.5px;top:93px;width:24.5px;height:4.5px;background:repeating-linear-gradient(90deg,#494949 0 2px,transparent 2px 3.5px);"></div>
<svg style="left:1674px;top:108px;" width="24" height="18" viewBox="0 0 24 18"><path fill="#dedede" d="M12 0.6 C5 0.6 0.5 4.6 0.5 9.4 C0.5 14.2 5.6 17.4 11.4 17.4 C13.6 17.4 14.6 16.4 14.4 15 C14.2 13.4 15.2 12.6 17 12.6 H19.6 C22 12.6 23.5 11 23.5 8.6 C23.5 4 18.6 0.6 12 0.6 Z"/><g fill="#535353"><circle cx="5.2" cy="9.6" r="1.9"/><circle cx="8.3" cy="5" r="1.9"/><circle cx="13.7" cy="3.8" r="1.9"/><circle cx="18.6" cy="6.6" r="1.9"/><circle cx="9" cy="13.4" r="1.9"/></g></svg>
<svg style="left:1726px;top:106.5px;" width="20" height="21" viewBox="0 0 20 21"><g fill="none" stroke="#d8d8d8" stroke-width="1.1"><path d="M6.2 0.8 L11.6 3.4 V9.6 L6.2 12.4 L0.8 9.6 V3.4 Z"/><path d="M0.8 3.4 L6.2 6 L11.6 3.4 M6.2 6 V12.4"/></g><g fill="#d8d8d8"><rect x="14.6" y="0.6" width="5" height="4.6"/><rect x="14.6" y="7.4" width="5" height="4.6"/><rect x="0.6" y="15.8" width="19" height="4.8"/></g><path d="M15.4 17.2 H18.4 L16.9 19.2 Z" fill="#535353"/></svg>
<span class="t" style="left:1761.2px;top:108.80px;height:18px;line-height:18px;font-size:13px;font-weight:bold;color:#f4f4f4;transform:scaleX(0.9329);-webkit-text-stroke:0;">Properties</span>
<!-- p_tools -->
<div class="abs" style="left:0px;top:74px;width:47.5px;height:963px;background:#535353;"></div>
<div class="abs" style="left:0px;top:74px;width:1.2px;height:963px;background:#484848;"></div>
<div class="abs" style="left:47.5px;top:74px;width:3.2px;height:963px;background:#3a3a3a;"></div>
<div class="abs" style="left:0px;top:73.6px;width:47.5px;height:13.8px;background:#454545;"></div>
<svg style="left:8.2px;top:78px;" width="8" height="5" viewBox="0 0 8 5"><path d="M0.6 0.4 L3.2 2.5 L0.6 4.6 M4.4 0.4 L7 2.5 L4.4 4.6" stroke="#d8d8d8" stroke-width="1.2" fill="none"/></svg>
<div class="abs" style="left:11.5px;top:92.6px;width:24.4px;height:4.6px;background:repeating-linear-gradient(90deg,#464646 0 2px,transparent 2px 3.5px);"></div>
<svg style="left:13.4px;top:115.8px;" width="19.8" height="19.8" viewBox="0 0 19.8 19.8"><g stroke="#dddddd" stroke-width="1.6" fill="none"><path d="M9.9 3 V16.8 M3 9.9 H16.8"/></g><g fill="#dddddd"><path d="M9.9 0 L13 3.8 H6.8 Z"/><path d="M9.9 19.8 L13 16 H6.8 Z"/><path d="M0 9.9 L3.8 6.8 V13 Z"/><path d="M19.8 9.9 L16 6.8 V13 Z"/></g></svg>
<svg style="left:13.4px;top:149px;" width="20.8" height="17.6" viewBox="0 0 20.8 17.6"><rect x="0.9" y="0.9" width="19" height="15.8" rx="1.5" fill="none" stroke="#dddddd" stroke-width="1.7" stroke-dasharray="4.6 2.5" stroke-dashoffset="2.3"/></svg>
<svg style="left:36px;top:165.6px;" width="3.6" height="3.6" viewBox="0 0 3.6 3.6"><path d="M3.6 0 V3.6 H0 Z" fill="#c4c4c4"/></svg>
<svg style="left:13.4px;top:178.9px;" width="20.4" height="22.4" viewBox="0 0 20.4 22.4"><g fill="none" stroke="#dddddd" stroke-width="1.5" stroke-linejoin="round"><path d="M6.2 13.2 L0.8 3.6 L11.4 7 L19.2 0.8 V12.2 L10.4 15.4"/><circle cx="8.2" cy="14.4" r="1.9"/><path d="M6.6 15.6 L1.2 18.6 M9 16.2 L5.8 21.6"/></g></svg>
<svg style="left:36px;top:198.4px;" width="3.6" height="3.6" viewBox="0 0 3.6 3.6"><path d="M3.6 0 V3.6 H0 Z" fill="#c4c4c4"/></svg>
<svg style="left:14px;top:212.2px;" width="20.6" height="23.4" viewBox="0 0 20.6 23.4"><rect x="0.8" y="0.8" width="16.4" height="16.4" fill="none" stroke="#dddddd" stroke-width="1.5" stroke-dasharray="1.4 1.2"/><path d="M4.4 4.4 H13.4 V8.2 H10.2 V13.4 H4.4 Z" fill="#dddddd"/><path d="M11.2 9.6 L20.2 18 L15.4 18.2 L12 22.6 Z" fill="#dddddd" stroke="#535353" stroke-width="0.8"/></svg>
<svg style="left:36px;top:231.4px;" width="3.6" height="3.6" viewBox="0 0 3.6 3.6"><path d="M3.6 0 V3.6 H0 Z" fill="#c4c4c4"/></svg>
<svg style="left:10.7px;top:245px;" width="23.6" height="19.8" viewBox="0 0 23.6 19.8"><path d="M1.2 1 L5.8 0.6 L6.2 6.4 L1.6 6 Z M1.2 1 L2.6 2.6 L2.8 7.4 M2.6 2.6 L6.6 2.2" fill="none" stroke="#dddddd" stroke-width="0.9"/><g transform="translate(21.3,2.6) rotate(45)"><rect x="-2.2" y="-2.3" width="4.4" height="7" rx="2.2" fill="#dddddd"/><rect x="-4.1" y="4" width="8.2" height="2.5" rx="0.6" fill="#dddddd"/><rect x="-1.5" y="6.4" width="3" height="2" fill="#dddddd"/><path d="M-2.1 8.2 V18 C-2.1 20.6 -1 22 0 23.2 C1 22 2.1 20.6 2.1 18 V8.2" fill="none" stroke="#dddddd" stroke-width="1.4"/></g></svg>
<svg style="left:14.8px;top:278.3px;" width="19" height="19.8" viewBox="0 0 19 19.8"><path d="M17.6 0.2 C18.8 0.6 18.8 2 18.2 3 L11 13.6 L8 11.6 L15.4 1 C16 0.2 16.8 -0.1 17.6 0.2 Z" fill="#dddddd"/><path d="M7 12.6 L10 14.6 C9.4 18.4 4.4 19.6 0.2 19.4 C2.4 18 2.6 16.6 3.2 15 C3.8 13.4 5.4 12.2 7 12.6 Z" fill="#dddddd"/></svg>
<svg style="left:36px;top:295.6px;" width="3.6" height="3.6" viewBox="0 0 3.6 3.6"><path d="M3.6 0 V3.6 H0 Z" fill="#c4c4c4"/></svg>
<svg style="left:15px;top:310px;" width="16.6" height="20.4" viewBox="0 0 16.6 20.4"><path d="M8.3 0 C11.5 0 12.9 2.7 11.9 5 C11.2 6.8 10.5 8 10.5 9.6 C10.5 11 11.2 12 12.6 12 H16.6 V16.4 H0 V12 H4 C5.4 12 6.1 11 6.1 9.6 C6.1 8 5.4 6.8 4.7 5 C3.7 2.7 5.1 0 8.3 0 Z" fill="#dddddd"/><rect x="0" y="18.2" width="16.6" height="1.6" fill="#dddddd"/></svg>
<svg style="left:36px;top:327.6px;" width="3.6" height="3.6" viewBox="0 0 3.6 3.6"><path d="M3.6 0 V3.6 H0 Z" fill="#c4c4c4"/></svg>
<svg style="left:14px;top:344.2px;" width="19" height="18.2" viewBox="0 0 19 18.2"><path d="M12.2 0.6 L18.4 6.6 L11 14 L4.6 8 Z" fill="#dddddd"/><path d="M4.6 8 L0.9 11.8 C0.3 12.4 0.3 13.2 0.9 13.8 L3.8 16.6 C4.4 17.2 5.4 17.2 6 16.6 L9.4 13.2 M7 17.2 H19" fill="none" stroke="#dddddd" stroke-width="1.4"/></svg>
<svg style="left:36px;top:360px;" width="3.6" height="3.6" viewBox="0 0 3.6 3.6"><path d="M3.6 0 V3.6 H0 Z" fill="#c4c4c4"/></svg>
<svg style="left:11.1px;top:374.5px;" width="24.2" height="21.4" viewBox="0 0 24.2 21.4"><path d="M1.2 1 L5.8 0.6 L6.2 6.4 L1.6 6 Z M1.2 1 L2.6 2.6 L2.8 7.4 M2.6 2.6 L6.6 2.2" fill="none" stroke="#dddddd" stroke-width="0.9"/><path d="M12 5.2 L19.6 12.4 L10.6 20.6 L4.6 13.2 Z" fill="none" stroke="#dddddd" stroke-width="1.5" stroke-linejoin="round"/><path d="M12.6 10.4 C11.8 6.2 10.6 4 9.4 4.4 C8.4 4.8 9 7 10 8.4" fill="none" stroke="#dddddd" stroke-width="1.3"/><path d="M12.6 7.6 V13" stroke="#dddddd" stroke-width="1.3"/><path d="M21.8 14 C23 16 23.6 17 23.6 18 C23.6 19.2 22.8 20 21.8 20 C20.8 20 20 19.2 20 18 C20 17 20.6 16 21.8 14 Z" fill="#dddddd"/></svg>
<svg style="left:15.6px;top:409.8px;" width="17.2" height="17.2" viewBox="0 0 17.2 17.2"><path d="M0 0 H17.2 V4.4 H15.8 C15.6 2.6 15 1.7 13.2 1.7 H9.9 V14.4 C9.9 15.6 10.6 15.9 12.6 15.9 V17.2 H4.6 V15.9 C6.6 15.9 7.3 15.6 7.3 14.4 V1.7 H4 C2.2 1.7 1.6 2.6 1.4 4.4 H0 Z" fill="#dddddd"/></svg>
<svg style="left:36px;top:424.6px;" width="3.6" height="3.6" viewBox="0 0 3.6 3.6"><path d="M3.6 0 V3.6 H0 Z" fill="#c4c4c4"/></svg>
<svg style="left:14.8px;top:441px;" width="19" height="18.4" viewBox="0 0 19 18.4"><path d="M12.6 0.4 L18.6 6.4 L16.2 8.6 L10.4 2.8 Z" fill="#dddddd"/><path d="M9.8 3.8 L15.2 9.2 L12.6 15 L0.8 17.6 L3.6 6.2 Z" fill="none" stroke="#dddddd" stroke-width="1.4" stroke-linejoin="round"/><path d="M1.2 17.2 L7.6 10.8" stroke="#dddddd" stroke-width="1.1"/><circle cx="8.4" cy="10" r="1.5" fill="none" stroke="#dddddd" stroke-width="1.1"/></svg>
<svg style="left:36px;top:456.8px;" width="3.6" height="3.6" viewBox="0 0 3.6 3.6"><path d="M3.6 0 V3.6 H0 Z" fill="#c4c4c4"/></svg>
<svg style="left:17.2px;top:473px;" width="13.4" height="20.6" viewBox="0 0 13.4 20.6"><path d="M1 1 L12.4 11.6 H7.6 L10.8 18.6 L8.2 19.8 L5 12.8 L1 16.2 Z" fill="#1c1c1c" stroke="#dddddd" stroke-width="1.4" stroke-linejoin="round"/></svg>
<svg style="left:36px;top:489.6px;" width="3.6" height="3.6" viewBox="0 0 3.6 3.6"><path d="M3.6 0 V3.6 H0 Z" fill="#c4c4c4"/></svg>
<svg style="left:13.4px;top:506.6px;" width="20.8" height="16" viewBox="0 0 20.8 16"><rect x="0.8" y="0.8" width="19.2" height="14.4" fill="#6e6e6e" stroke="#dddddd" stroke-width="1.5"/></svg>
<svg style="left:36px;top:521.6px;" width="3.6" height="3.6" viewBox="0 0 3.6 3.6"><path d="M3.6 0 V3.6 H0 Z" fill="#c4c4c4"/></svg>
<div class="abs" style="left:4.9px;top:534px;width:37.4px;height:28px;background:#383838;border-radius:2px;"></div>
<svg style="left:14.4px;top:538.4px;" width="17.7" height="19.8" viewBox="0 0 18.3 20"><g fill="#dddddd"><rect x="6.05" y="1.45" width="2.15" height="12" rx="1.07"/><rect x="9.15" y="0" width="2.15" height="12" rx="1.07"/><rect x="12.55" y="1.15" width="2.15" height="12" rx="1.07"/><rect x="15.85" y="5" width="2.2" height="9" rx="1.1" transform="rotate(5 16.9 12)"/><path d="M1.7 8.6 L6.05 12.2 V9.3 H17.7 L17.2 13.8 C16.8 17.6 14 19.9 10.6 19.9 C7.6 19.9 5.8 18.4 4.3 16.2 L0.3 10.4 C-0.4 9 0.8 7.9 1.7 8.6 Z"/></g><g fill="#dddddd" opacity=".42"><rect x="8.2" y="3" width="0.95" height="6.4"/><rect x="11.3" y="3" width="1.25" height="6.4"/><rect x="14.7" y="6.2" width="1.2" height="3.2"/></g></svg>
<svg style="left:36px;top:555px;" width="3.6" height="3.6" viewBox="0 0 3.6 3.6"><path d="M3.6 0 V3.6 H0 Z" fill="#c4c4c4"/></svg>
<svg style="left:13.2px;top:570.1px;" width="20.4" height="20.4" viewBox="0 0 20.4 20.4"><circle cx="8.2" cy="8.2" r="7.3" fill="none" stroke="#dddddd" stroke-width="1.6"/><path d="M13.6 13.6 L19.4 19.4" stroke="#dddddd" stroke-width="2.4" stroke-linecap="round"/><path d="M4.2 7.4 C4.6 5.4 6.2 4 8.2 4" fill="none" stroke="#dddddd" stroke-width="1.1"/></svg>
<svg style="left:13.2px;top:610.6px;" width="20.4" height="5.8" viewBox="0 0 20.4 5.8"><g fill="#dddddd"><circle cx="2.9" cy="2.9" r="2.4"/><circle cx="10.2" cy="2.9" r="2.4"/><circle cx="17.5" cy="2.9" r="2.4"/></g></svg>
<svg style="left:36px;top:620.8px;" width="3.6" height="3.6" viewBox="0 0 3.6 3.6"><path d="M3.6 0 V3.6 H0 Z" fill="#c4c4c4"/></svg>
<div class="abs" style="left:10px;top:641px;width:7.8px;height:7.8px;background:#e6e6e6;"></div>
<div class="abs" style="left:5px;top:636.5px;width:8.4px;height:8.4px;background:#111;border:1.3px solid #e6e6e6;"></div>
<svg style="left:27.3px;top:636.5px;" width="11.6" height="12.2" viewBox="0 0 11.6 12.2"><path d="M0 2.8 L3.6 0 V2 H9.4 V8.4 H11.6 L8.6 12.2 L5.6 8.4 H7.8 V3.6 H3.6 V5.6 Z" fill="#dddddd"/></svg>
<div class="abs" style="left:17.2px;top:667.7px;width:22.8px;height:22.9px;background:#ffffff;border:1px solid #3c3c3c;box-shadow:inset 0 0 0 1px #ffffff;"></div>
<div class="abs" style="left:5px;top:656.2px;width:23px;height:22.8px;background:#663399;border:1px solid #3c3c3c;box-shadow:inset 0 0 0 1.2px #e8e8e8;"></div>
<svg style="left:12.6px;top:706.8px;" width="21.8" height="16.2" viewBox="0 0 21.8 16.2"><rect x="0.7" y="0.7" width="20.4" height="14.8" fill="none" stroke="#dddddd" stroke-width="1.4"/><circle cx="10.9" cy="8.1" r="4.8" fill="none" stroke="#dddddd" stroke-width="1.3" stroke-dasharray="1.5 1.3"/></svg>
<svg style="left:12.6px;top:739.1px;" width="21.8" height="16.2" viewBox="0 0 21.8 16.2"><rect x="0.7" y="4.6" width="14" height="10.9" fill="none" stroke="#dddddd" stroke-width="1.4"/><rect x="7" y="0.7" width="14.1" height="10.6" fill="#535353" stroke="#dddddd" stroke-width="1.4"/></svg>
<svg style="left:36px;top:756.4px;" width="3.6" height="3.6" viewBox="0 0 3.6 3.6"><path d="M3.6 0 V3.6 H0 Z" fill="#c4c4c4"/></svg>
<!-- p_layers -->
<div class="abs" style="left:1540px;top:759px;width:7px;height:259px;background:#242424;"></div>
<div class="abs" style="left:1546.4px;top:758.8px;width:291px;height:279px;background:#535353;"></div>
<div class="abs" style="left:1584px;top:758.8px;width:0.9px;height:237px;background:#4a4a4a;"></div>
<div class="abs" style="left:1584.8px;top:758.8px;width:223px;height:46.6px;background:#6b6b6b;"></div>
<div class="abs" style="left:1807.6px;top:758.8px;width:13px;height:46.6px;background:#616161;"></div>
<div class="abs" style="left:1584.8px;top:805.4px;width:236px;height:1.5px;background:#4a4a4a;"></div>
<svg style="left:1557.3px;top:775.8px;" width="16" height="10" viewBox="0 0 16 10"><path d="M0.3 5 C2.6 1.4 5.3 0.2 8 0.2 C10.7 0.2 13.4 1.4 15.7 5 C13.4 8.6 10.7 9.8 8 9.8 C5.3 9.8 2.6 8.6 0.3 5 Z" fill="#e8e8e8"/><circle cx="8" cy="4.8" r="3.1" fill="#4a4a4a"/><circle cx="8.9" cy="3.7" r="0.9" fill="#e8e8e8" opacity=".6"/></svg>
<div class="abs" style="left:1590.1px;top:760.9px;width:38px;height:38px;background:#ffffff;background-image:linear-gradient(45deg,#d4d4d4 25%,transparent 25%,transparent 75%,#d4d4d4 75%),linear-gradient(45deg,#d4d4d4 25%,transparent 25%,transparent 75%,#d4d4d4 75%);background-size:7.6px 7.6px;background-position:0 0,3.8px 3.8px;"></div>
<svg style="left:1586.4px;top:758.8px;" width="45.4" height="43.6" viewBox="0 0 45.4 43.6"><path d="M0.6 14 V0 M31 0.6 H44.8 V14 M44.8 29 V43 H31 M15 43 H0.6 V29" stroke="#f0f0f0" stroke-width="1.2" fill="none"/></svg>
<span class="t" style="left:1642.2px;top:768.80px;height:21px;line-height:21px;font-size:15px;font-weight:300;font-family:'Noto Sans CJK KR',sans-serif;color:#ececec;transform:scaleX(1.0128);-webkit-text-stroke:0;">보드타는 씰룩이</span>
<span class="t" style="left:1789.8px;top:768.10px;height:25px;line-height:25px;font-size:18px;font-style:italic;color:#e4e4e4;transform:scaleX(0.9275);-webkit-text-stroke:0;">fx</span>
<svg style="left:1811.2px;top:778.5px;" width="8" height="5.2" viewBox="0 0 8 5.2"><path d="M0.5 4.6 L4 0.9 L7.5 4.6" stroke="#d8d8d8" stroke-width="1.2" fill="none"/></svg>
<svg style="left:1609.2px;top:812.5px;" width="16" height="10" viewBox="0 0 16 10"><path d="M0.3 5 C2.6 1.4 5.3 0.2 8 0.2 C10.7 0.2 13.4 1.4 15.7 5 C13.4 8.6 10.7 9.8 8 9.8 C5.3 9.8 2.6 8.6 0.3 5 Z" fill="#e8e8e8"/><circle cx="8" cy="4.8" r="3.1" fill="#4a4a4a"/><circle cx="8.9" cy="3.7" r="0.9" fill="#e8e8e8" opacity=".6"/></svg>
<span class="t" style="left:1632.5px;top:804.80px;height:19px;line-height:19px;font-size:13.5px;color:#e6e6e6;transform:scaleX(0.9188);">Effects</span>
<svg style="left:1630.2px;top:836.2px;" width="16" height="10" viewBox="0 0 16 10"><path d="M0.3 5 C2.6 1.4 5.3 0.2 8 0.2 C10.7 0.2 13.4 1.4 15.7 5 C13.4 8.6 10.7 9.8 8 9.8 C5.3 9.8 2.6 8.6 0.3 5 Z" fill="#e8e8e8"/><circle cx="8" cy="4.8" r="3.1" fill="#4a4a4a"/><circle cx="8.9" cy="3.7" r="0.9" fill="#e8e8e8" opacity=".6"/></svg>
<span class="t" style="left:1653.7px;top:829.20px;height:19px;line-height:19px;font-size:13.5px;color:#e6e6e6;transform:scaleX(0.9036);">Outer Glow</span>
<div class="abs" style="left:1546.4px;top:851.4px;width:274px;height:1.6px;background:#484848;"></div>
<div class="abs" style="left:1808.4px;top:853px;width:12.1px;height:52px;background:#484848;"></div>
<svg style="left:1557.3px;top:874.4px;" width="16" height="10" viewBox="0 0 16 10"><path d="M0.3 5 C2.6 1.4 5.3 0.2 8 0.2 C10.7 0.2 13.4 1.4 15.7 5 C13.4 8.6 10.7 9.8 8 9.8 C5.3 9.8 2.6 8.6 0.3 5 Z" fill="#e8e8e8"/><circle cx="8" cy="4.8" r="3.1" fill="#4a4a4a"/><circle cx="8.9" cy="3.7" r="0.9" fill="#e8e8e8" opacity=".6"/></svg>
<div class="abs" style="left:1588.5px;top:858.4px;width:40.1px;height:39.9px;background:#4f4f4f;border:1px solid #3a3a3a;"></div>
<div class="abs" style="left:1597.4px;top:867.6px;width:23.1px;height:23px;background:#663399;"></div>
<div class="abs" style="left:1611.1px;top:881.3px;width:17.2px;height:17px;background:#4f4f4f;"></div>
<svg style="left:1612.6px;top:882.6px;" width="14.6" height="14.6" viewBox="0 0 14.6 14.6"><rect x="2.6" y="2.6" width="9.4" height="9.4" fill="none" stroke="#f0f0f0" stroke-width="1.3"/><g fill="#4f4f4f" stroke="#f0f0f0" stroke-width="1"><rect x="0.8" y="0.8" width="3.2" height="3.2"/><rect x="10.6" y="0.8" width="3.2" height="3.2"/><rect x="0.8" y="10.6" width="3.2" height="3.2"/><rect x="10.6" y="10.6" width="3.2" height="3.2"/></g></svg>
<span class="t" style="left:1641.5px;top:869.10px;height:19px;line-height:19px;font-size:13.5px;color:#e6e6e6;transform:scaleX(0.9020);">Rectangle 1</span>
<svg style="left:1768px;top:870.8px;" width="13" height="15.2" viewBox="0 0 13 15.2"><path d="M3.4 6.4 V4.2 C3.4 0 9.6 0 9.6 4.2 V6.4" fill="none" stroke="#e8e8e8" stroke-width="1.7"/><rect x="0.3" y="6.2" width="12.4" height="8.8" rx="1" fill="#e8e8e8"/><rect x="5.4" y="9.4" width="2.2" height="2.4" fill="#535353"/></svg>
<span class="t" style="left:1789.8px;top:866.70px;height:25px;line-height:25px;font-size:18px;font-style:italic;color:#e4e4e4;transform:scaleX(0.9275);-webkit-text-stroke:0;">fx</span>
<svg style="left:1811.2px;top:877.2px;" width="8" height="5.2" viewBox="0 0 8 5.2"><path d="M0.5 4.6 L4 0.9 L7.5 4.6" stroke="#d8d8d8" stroke-width="1.2" fill="none"/></svg>
<svg style="left:1609.2px;top:910.9px;" width="16" height="10" viewBox="0 0 16 10"><path d="M0.3 5 C2.6 1.4 5.3 0.2 8 0.2 C10.7 0.2 13.4 1.4 15.7 5 C13.4 8.6 10.7 9.8 8 9.8 C5.3 9.8 2.6 8.6 0.3 5 Z" fill="#e8e8e8"/><circle cx="8" cy="4.8" r="3.1" fill="#4a4a4a"/><circle cx="8.9" cy="3.7" r="0.9" fill="#e8e8e8" opacity=".6"/></svg>
<span class="t" style="left:1632.5px;top:904.00px;height:19px;line-height:19px;font-size:13.5px;color:#e6e6e6;transform:scaleX(0.9188);">Effects</span>
<svg style="left:1630.2px;top:934.8px;" width="16" height="10" viewBox="0 0 16 10"><path d="M0.3 5 C2.6 1.4 5.3 0.2 8 0.2 C10.7 0.2 13.4 1.4 15.7 5 C13.4 8.6 10.7 9.8 8 9.8 C5.3 9.8 2.6 8.6 0.3 5 Z" fill="#e8e8e8"/><circle cx="8" cy="4.8" r="3.1" fill="#4a4a4a"/><circle cx="8.9" cy="3.7" r="0.9" fill="#e8e8e8" opacity=".6"/></svg>
<span class="t" style="left:1653.7px;top:928.00px;height:19px;line-height:19px;font-size:13.5px;color:#e6e6e6;transform:scaleX(0.9104);">Gradient Overlay</span>
<div class="abs" style="left:1546.4px;top:950.1px;width:274px;height:1.6px;background:#484848;"></div>
<svg style="left:1557.3px;top:973.1px;" width="16" height="10" viewBox="0 0 16 10"><path d="M0.3 5 C2.6 1.4 5.3 0.2 8 0.2 C10.7 0.2 13.4 1.4 15.7 5 C13.4 8.6 10.7 9.8 8 9.8 C5.3 9.8 2.6 8.6 0.3 5 Z" fill="#e8e8e8"/><circle cx="8" cy="4.8" r="3.1" fill="#4a4a4a"/><circle cx="8.9" cy="3.7" r="0.9" fill="#e8e8e8" opacity=".6"/></svg>
<div class="abs" style="left:1588.5px;top:957.6px;width:40.1px;height:39px;background:#4f4f4f;border:1px solid #3a3a3a;"></div>
<div class="abs" style="left:1597.4px;top:965.2px;width:23.1px;height:24.2px;background:#ffffff;"></div>
<span class="t" style="left:1641.5px;top:967.80px;height:19px;line-height:19px;font-size:13.5px;font-style:italic;color:#e6e6e6;transform:scaleX(0.9256);">Background</span>
<svg style="left:1788.2px;top:969.5px;" width="12.6" height="15.2" viewBox="0 0 12.6 15.2"><path d="M3.3 6.4 V4.2 C3.3 0.4 9.3 0.4 9.3 4.2 V6.4" fill="none" stroke="#e0e0e0" stroke-width="1.3"/><rect x="0.7" y="6.4" width="11.2" height="8" rx="1" fill="none" stroke="#e0e0e0" stroke-width="1.3"/><rect x="5.2" y="9.3" width="2.2" height="2.4" fill="#e0e0e0"/></svg>
<div class="abs" style="left:1820.5px;top:758.8px;width:16.5px;height:237px;background:#4d4d4d;"></div>
<div class="abs" style="left:1823.7px;top:775.4px;width:13.3px;height:193.5px;background:#6b6b6b;"></div>
<svg style="left:1827.8px;top:764.5px;" width="8" height="5" viewBox="0 0 8 5"><path d="M0.4 4.4 L4 0.8 L7.6 4.4" stroke="#8a8a8a" stroke-width="1.1" fill="none"/></svg>
<svg style="left:1827.8px;top:981px;" width="8" height="5" viewBox="0 0 8 5"><path d="M0.4 0.6 L4 4.2 L7.6 0.6" stroke="#8a8a8a" stroke-width="1.1" fill="none"/></svg>
<div class="abs" style="left:1546.4px;top:995.9px;width:291px;height:32.4px;background:#535353;"></div>
<div class="abs" style="left:1546.4px;top:1028.2px;width:291px;height:1.8px;background:#3a3a3a;"></div>
<div class="abs" style="left:1546.4px;top:1030px;width:291px;height:7px;background:#4f4f4f;"></div>
<div class="abs" style="left:1680.3px;top:1032px;width:24.5px;height:3.4px;background:repeating-linear-gradient(90deg,#444 0 2px,transparent 2px 3.5px);"></div>
<svg style="left:1586.9px;top:1008px;" width="18" height="9.8" viewBox="0 0 18 9.8"><g fill="none" stroke="#8e8e8e" stroke-width="1.6"><path d="M7.2 0.8 H4.9 C-0.6 0.8 -0.6 9 4.9 9 H7.2 M10.8 0.8 H13.1 C18.6 0.8 18.6 9 13.1 9 H10.8 M5.4 4.9 H12.6"/></g></svg>
<span class="t" style="left:1623.3px;top:998.50px;height:27px;line-height:27px;font-size:19px;font-style:italic;color:#8e8e8e;transform:scaleX(0.9336);-webkit-text-stroke:0;">fx</span>
<svg style="left:1636.6px;top:1018.4px;" width="4" height="2.4" viewBox="0 0 4 2.4"><path d="M0 0 H4 L2 2.4 Z" fill="#8e8e8e"/></svg>
<svg style="left:1655.3px;top:1006.4px;" width="16" height="11.6" viewBox="0 0 16 11.6"><rect width="16" height="11.6" rx="0.8" fill="#8e8e8e"/><circle cx="8" cy="5.8" r="3.4" fill="#535353"/></svg>
<svg style="left:1690.4px;top:1005.6px;" width="13.8" height="13.4" viewBox="0 0 13.8 13.4"><circle cx="6.8" cy="6.7" r="5.9" fill="none" stroke="#8e8e8e" stroke-width="1.5"/><path d="M10.97 2.53 A5.9 5.9 0 0 1 2.63 10.87 Z" fill="#8e8e8e"/></svg>
<svg style="left:1704.2px;top:1018.4px;" width="4" height="2.4" viewBox="0 0 4 2.4"><path d="M0 0 H4 L2 2.4 Z" fill="#8e8e8e"/></svg>
<svg style="left:1723.2px;top:1006px;" width="15.4" height="12.6" viewBox="0 0 15.4 12.6"><path d="M0 1 C0 0.4 0.4 0 1 0 H5.6 L7 1.8 H14.4 C15 1.8 15.4 2.2 15.4 2.8 V11.6 C15.4 12.2 15 12.6 14.4 12.6 H1 C0.4 12.6 0 12.2 0 11.6 Z" fill="#8e8e8e"/></svg>
<svg style="left:1757.9px;top:1005.6px;" width="14.2" height="13.8" viewBox="0 0 14.2 13.8"><rect x="0.7" y="0.7" width="12.8" height="12.4" fill="none" stroke="#8e8e8e" stroke-width="1.4"/><path d="M7.1 3.6 V10.2 M3.8 6.9 H10.4" stroke="#8e8e8e" stroke-width="1.5"/></svg>
<svg style="left:1791.2px;top:1004.8px;" width="13.6" height="15.6" viewBox="0 0 13.6 15.6"><g fill="none" stroke="#8e8e8e" stroke-width="1.3"><path d="M0.4 3.2 H13.2 M4.4 3 V1.4 C4.4 0.9 4.8 0.6 5.3 0.6 H8.3 C8.8 0.6 9.2 0.9 9.2 1.4 V3"/><path d="M1.7 3.4 L2.3 13.8 C2.35 14.5 2.8 15 3.5 15 H10.1 C10.8 15 11.25 14.5 11.3 13.8 L11.9 3.4"/><path d="M4.7 5.6 V12.6 M6.8 5.6 V12.6 M8.9 5.6 V12.6" stroke-width="1.1"/></g></svg>
<!-- p_dialog -->
<div class="abs" style="left:1035.4px;top:135.4px;width:803px;height:623.6px;background:#535353;box-shadow:0 0 7px 1px rgba(0,0,0,.55);"></div>
<div class="abs" style="left:1035.4px;top:135.4px;width:803px;height:38.2px;background:#8764b8;"></div>
<div class="abs" style="left:1035.4px;top:135.4px;width:2px;height:623.6px;background:#8764b8;"></div>
<div class="abs" style="left:1035.4px;top:757px;width:803px;height:2px;background:#8764b8;"></div>
<span class="t" style="left:1045.8px;top:145.00px;height:22px;line-height:22px;font-size:16px;color:#f6f2fb;transform:scaleX(0.8920);">Layer Style</span>
<div class="fs" style="left:1048.7px;top:189.8px;width:286.4px;height:555px"></div>
<div class="abs" style="left:1313.2px;top:192px;width:19.6px;height:518px;background:#4a4a4a;"></div>
<div class="abs" style="left:1051.6px;top:223.10000000000002px;width:261.6px;height:1.6px;background:#474747;"></div>
<span class="t" style="left:1059.3px;top:197.30px;height:19px;line-height:19px;font-size:13.5px;color:#e4e4e4;transform:scaleX(0.8921);">Styles</span>
<div class="abs" style="left:1051.6px;top:255.65000000000003px;width:261.6px;height:1.6px;background:#474747;"></div>
<span class="t" style="left:1059.3px;top:229.85px;height:19px;line-height:19px;font-size:13.5px;color:#e4e4e4;transform:scaleX(0.9248);">Blending Options</span>
<div class="abs" style="left:1051.6px;top:288.2px;width:261.6px;height:1.6px;background:#474747;"></div>
<div class="cb" style="left:1058px;top:265.59999999999997px;width:12.6px;height:12.6px"></div>
<span class="t" style="left:1076.3px;top:262.40px;height:19px;line-height:19px;font-size:13.5px;color:#e4e4e4;transform:scaleX(0.9097);">Bevel &amp; Emboss</span>
<div class="abs" style="left:1051.6px;top:320.75px;width:261.6px;height:1.6px;background:#474747;"></div>
<div class="cb" style="left:1070.9px;top:298.15px;width:12.6px;height:12.6px"></div>
<span class="t" style="left:1089.8px;top:294.95px;height:19px;line-height:19px;font-size:13.5px;color:#e4e4e4;transform:scaleX(0.9036);">Contour</span>
<div class="abs" style="left:1051.6px;top:353.3px;width:261.6px;height:1.6px;background:#474747;"></div>
<div class="cb" style="left:1070.9px;top:330.7px;width:12.6px;height:12.6px"></div>
<span class="t" style="left:1089.8px;top:327.50px;height:19px;line-height:19px;font-size:13.5px;color:#e4e4e4;transform:scaleX(0.9191);">Texture</span>
<div class="abs" style="left:1051.6px;top:385.85px;width:261.6px;height:1.6px;background:#474747;"></div>
<div class="cb" style="left:1058px;top:363.25px;width:12.6px;height:12.6px"></div>
<span class="t" style="left:1076.3px;top:360.05px;height:19px;line-height:19px;font-size:13.5px;color:#e4e4e4;transform:scaleX(0.8967);">Stroke</span>
<svg style="left:1291.4px;top:360.85px;" width="18.4" height="18" viewBox="0 0 18.4 18"><rect x="0.7" y="0.7" width="17" height="16.6" fill="none" stroke="#e6e6e6" stroke-width="1.3"/><path d="M9.2 4.4 V13.6 M4.6 9 H13.8" stroke="#e6e6e6" stroke-width="1.7"/></svg>
<div class="abs" style="left:1051.6px;top:418.40000000000003px;width:261.6px;height:1.6px;background:#474747;"></div>
<div class="cb" style="left:1058px;top:395.8px;width:12.6px;height:12.6px"></div>
<span class="t" style="left:1076.3px;top:392.60px;height:19px;line-height:19px;font-size:13.5px;color:#e4e4e4;transform:scaleX(0.9398);">Inner Shadow</span>
<svg style="left:1291.4px;top:393.40000000000003px;" width="18.4" height="18" viewBox="0 0 18.4 18"><rect x="0.7" y="0.7" width="17" height="16.6" fill="none" stroke="#e6e6e6" stroke-width="1.3"/><path d="M9.2 4.4 V13.6 M4.6 9 H13.8" stroke="#e6e6e6" stroke-width="1.7"/></svg>
<div class="abs" style="left:1051.6px;top:450.95px;width:261.6px;height:1.6px;background:#474747;"></div>
<div class="cb" style="left:1058px;top:428.34999999999997px;width:12.6px;height:12.6px"></div>
<span class="t" style="left:1076.3px;top:425.15px;height:19px;line-height:19px;font-size:13.5px;color:#e4e4e4;transform:scaleX(0.9390);">Inner Glow</span>
<div class="abs" style="left:1051.6px;top:483.5px;width:261.6px;height:1.6px;background:#474747;"></div>
<div class="cb" style="left:1058px;top:460.9px;width:12.6px;height:12.6px"></div>
<span class="t" style="left:1076.3px;top:457.70px;height:19px;line-height:19px;font-size:13.5px;color:#e4e4e4;transform:scaleX(0.9129);">Satin</span>
<div class="abs" style="left:1051.6px;top:516.05px;width:261.6px;height:1.6px;background:#474747;"></div>
<div class="cb" style="left:1058px;top:493.45px;width:12.6px;height:12.6px"></div>
<span class="t" style="left:1076.3px;top:490.25px;height:19px;line-height:19px;font-size:13.5px;color:#e4e4e4;transform:scaleX(0.9027);">Color Overlay</span>
<svg style="left:1291.4px;top:491.05px;" width="18.4" height="18" viewBox="0 0 18.4 18"><rect x="0.7" y="0.7" width="17" height="16.6" fill="none" stroke="#e6e6e6" stroke-width="1.3"/><path d="M9.2 4.4 V13.6 M4.6 9 H13.8" stroke="#e6e6e6" stroke-width="1.7"/></svg>
<div class="abs" style="left:1051.6px;top:548.5999999999999px;width:261.6px;height:1.6px;background:#474747;"></div>
<div class="cb" style="left:1058px;top:526.0px;width:12.6px;height:12.6px"></div>
<span class="t" style="left:1076.3px;top:522.80px;height:19px;line-height:19px;font-size:13.5px;color:#e4e4e4;transform:scaleX(0.9133);">Gradient Overlay</span>
<svg style="left:1291.4px;top:523.5999999999999px;" width="18.4" height="18" viewBox="0 0 18.4 18"><rect x="0.7" y="0.7" width="17" height="16.6" fill="none" stroke="#e6e6e6" stroke-width="1.3"/><path d="M9.2 4.4 V13.6 M4.6 9 H13.8" stroke="#e6e6e6" stroke-width="1.7"/></svg>
<div class="abs" style="left:1051.6px;top:581.1499999999999px;width:261.6px;height:1.6px;background:#474747;"></div>
<div class="cb" style="left:1058px;top:558.55px;width:12.6px;height:12.6px"></div>
<span class="t" style="left:1076.3px;top:555.35px;height:19px;line-height:19px;font-size:13.5px;color:#e4e4e4;transform:scaleX(0.9190);">Pattern Overlay</span>
<div class="abs" style="left:1051.6px;top:582.1px;width:261.6px;height:31.2px;background:#6b6b6b;"></div>
<div class="abs" style="left:1051.6px;top:613.6999999999999px;width:261.6px;height:1.6px;background:#474747;"></div>
<div class="cb" style="left:1058px;top:591.1px;width:12.6px;height:12.6px;background:#eeeeee;border-color:#f4f4f4"></div>
<svg style="left:1058px;top:591.1px;" width="12.6" height="12.6" viewBox="0 0 12.6 12.6"><path d="M2.6 6.4 L5.2 9.2 L10 3.2" stroke="#222" stroke-width="2.1" fill="none"/></svg>
<span class="t" style="left:1076.3px;top:587.90px;height:19px;line-height:19px;font-size:13.5px;color:#f2f2f2;transform:scaleX(0.9183);">Outer Glow</span>
<div class="cb" style="left:1058px;top:623.6500000000001px;width:12.6px;height:12.6px"></div>
<span class="t" style="left:1076.3px;top:620.45px;height:19px;line-height:19px;font-size:13.5px;color:#e4e4e4;transform:scaleX(0.9082);">Drop Shadow</span>
<svg style="left:1291.4px;top:621.25px;" width="18.4" height="18" viewBox="0 0 18.4 18"><rect x="0.7" y="0.7" width="17" height="16.6" fill="none" stroke="#e6e6e6" stroke-width="1.3"/><path d="M9.2 4.4 V13.6 M4.6 9 H13.8" stroke="#e6e6e6" stroke-width="1.7"/></svg>
<span class="t" style="left:1060.5px;top:715.70px;height:25px;line-height:25px;font-size:18px;font-style:italic;color:#dcdcdc;transform:scaleX(1.0346);-webkit-text-stroke:0;">fx</span>
<svg style="left:1075.2px;top:734.4px;" width="5" height="3" viewBox="0 0 5 3"><path d="M0 0 H5 L2.5 3 Z" fill="#dcdcdc"/></svg>
<svg style="left:1095.6px;top:720.5px;" width="13.4" height="13.2" viewBox="0 0 13.4 13.2"><path d="M6.7 0 L13.4 7 H9.6 V13.2 H3.8 V7 H0 Z" fill="#8c8c8c"/></svg>
<svg style="left:1128.6px;top:721.5px;" width="13.4" height="13.2" viewBox="0 0 13.4 13.2"><path d="M6.7 13.2 L13.4 6.2 H9.6 V0 H3.8 V6.2 H0 Z" fill="#8c8c8c"/></svg>
<svg style="left:1308.2px;top:719.6px;" width="13.6" height="15.6" viewBox="0 0 13.6 15.6"><g fill="none" stroke="#d2d2d2" stroke-width="1.3"><path d="M0.4 3.2 H13.2 M4.4 3 V1.4 C4.4 0.9 4.8 0.6 5.3 0.6 H8.3 C8.8 0.6 9.2 0.9 9.2 1.4 V3"/><path d="M1.7 3.4 L2.3 13.8 C2.35 14.5 2.8 15 3.5 15 H10.1 C10.8 15 11.25 14.5 11.3 13.8 L11.9 3.4"/><path d="M4.7 5.6 V12.6 M6.8 5.6 V12.6 M8.9 5.6 V12.6" stroke-width="1.1"/></g></svg>
<div class="fs" style="left:1356.4px;top:193.9px;width:465.39999999999986px;height:548.7px"></div><div class="fsl" style="left:1375.7px;top:188.9px;width:75.89999999999986px"></div><span class="t" style="left:1382.7px;top:184.00px;height:19px;line-height:19px;font-size:13.5px;color:#e4e4e4;transform:scaleX(0.9065);">Outer Glow</span>
<div class="fs" style="left:1369px;top:217.2px;width:440.20000000000005px;height:149.5px"></div><div class="fsl" style="left:1387.4px;top:212.2px;width:63.59999999999991px"></div><span class="t" style="left:1394.4px;top:207.30px;height:19px;line-height:19px;font-size:13.5px;color:#e4e4e4;transform:scaleX(0.9054);">Structure</span>
<div class="fs" style="left:1369px;top:382.2px;width:440.20000000000005px;height:107.19999999999999px"></div><div class="fsl" style="left:1387.4px;top:377.2px;width:65.69999999999982px"></div><span class="t" style="left:1394.4px;top:372.30px;height:19px;line-height:19px;font-size:13.5px;color:#e4e4e4;transform:scaleX(0.9186);">Elements</span>
<div class="fs" style="left:1369px;top:505.9px;width:440.20000000000005px;height:130.60000000000002px"></div><div class="fsl" style="left:1387.4px;top:500.9px;width:53.09999999999991px"></div><span class="t" style="left:1394.4px;top:496.00px;height:19px;line-height:19px;font-size:13.5px;color:#e4e4e4;transform:scaleX(0.9303);">Quality</span>
<span class="t" style="left:1392.3px;top:239.60px;height:19px;line-height:19px;font-size:13.5px;color:#e4e4e4;transform:scaleX(0.9141);"><u>B</u>lend Mode:</span>
<div class="inp" style="left:1470px;top:240.2px;width:144.4px;height:21.8px;border-color:#5e5e5e"></div>
<span class="t" style="left:1480.5px;top:241.00px;height:19px;line-height:19px;font-size:13.5px;color:#f0f0f0;transform:scaleX(0.9123);">Normal</span>
<svg style="left:1602.3px;top:249px;" width="8.4" height="5.4" viewBox="0 0 8.4 5.4"><path d="M0.6 0.6 L4.2 4.3 L7.8 0.6" stroke="#c8c8c8" stroke-width="1.2" fill="none"/></svg>
<span class="t" style="left:1415.3px;top:267.00px;height:19px;line-height:19px;font-size:13.5px;color:#e4e4e4;transform:scaleX(0.9345);"><u>O</u>pacity:</span>
<div class="abs" style="left:1476.6px;top:271.3px;width:119px;height:2.4px;background:#747474;border-radius:1.2px;"></div><svg style="left:1571.5px;top:274.0px;" width="13" height="13.5" viewBox="0 0 13 13.5"><path d="M6.5 0.3 L12.3 8.2 C13.2 9.8 12.6 12.9 10 12.9 H3 C0.4 12.9 -0.2 9.8 0.7 8.2 Z" fill="#f4f4f4" stroke="#3c3c3c" stroke-width="0.6"/></svg>
<div class="inp" style="left:1607.5px;top:267.1px;width:50.8px;height:20.1px;border:1.5px solid #2b62b8;background:#454545"></div>
<div class="abs" style="left:1611.3px;top:270.3px;width:16px;height:14px;background:#2f6fd6;"></div>
<span class="t" style="left:1612px;top:267.20px;height:19px;line-height:19px;font-size:13.5px;color:#ffffff;transform:scaleX(0.9447);">85</span>
<span class="t" style="left:1664.3px;top:267.40px;height:19px;line-height:19px;font-size:13.5px;color:#e4e4e4;transform:scaleX(0.8655);">%</span>
<span class="t" style="left:1427.3px;top:294.20px;height:19px;line-height:19px;font-size:13.5px;color:#e4e4e4;transform:scaleX(0.8960);"><u>N</u>oise:</span>
<div class="abs" style="left:1476.6px;top:298.8px;width:119px;height:2.4px;background:#747474;border-radius:1.2px;"></div><svg style="left:1468.9px;top:301.5px;" width="13" height="13.5" viewBox="0 0 13 13.5"><path d="M6.5 0.3 L12.3 8.2 C13.2 9.8 12.6 12.9 10 12.9 H3 C0.4 12.9 -0.2 9.8 0.7 8.2 Z" fill="#f4f4f4" stroke="#3c3c3c" stroke-width="0.6"/></svg>
<div class="inp" style="left:1607.5px;top:294px;width:50.8px;height:20.1px"></div>
<span class="t" style="left:1612.3px;top:294.40px;height:19px;line-height:19px;font-size:13.5px;color:#f0f0f0;transform:scaleX(0.8782);">0</span>
<span class="t" style="left:1664.3px;top:294.60px;height:19px;line-height:19px;font-size:13.5px;color:#e4e4e4;transform:scaleX(0.8655);">%</span>
<svg style="left:1403.9px;top:330.8px;" width="14.4" height="14.4" viewBox="0 0 14.4 14.4"><circle cx="7.2" cy="7.2" r="6.7" fill="#f2f2f2" stroke="#3a3a3a" stroke-width="0.6"/><circle cx="7.2" cy="7.2" r="2.7" fill="#3c3c3c"/></svg>
<div class="abs" style="left:1430.6px;top:323.9px;width:29.8px;height:29px;background:#ff0a32;border:1px solid #3a3a3a;"></div>
<svg style="left:1476.7px;top:331.2px;" width="13.6" height="13.6" viewBox="0 0 13.6 13.6"><circle cx="6.8" cy="6.8" r="6.1" fill="#484848" stroke="#6c6c6c" stroke-width="1"/></svg>
<div class="abs" style="left:1504.2px;top:325.2px;width:153px;height:28px;background:#454545;border:1px solid #5c5c5c;border-radius:2px;"></div>
<div class="abs" style="left:1505.4px;top:326.4px;width:133.5px;height:25.6px;background:#ffffff;background-image:linear-gradient(45deg,#cfcfcf 25%,transparent 25%,transparent 75%,#cfcfcf 75%),linear-gradient(45deg,#cfcfcf 25%,transparent 25%,transparent 75%,#cfcfcf 75%);background-size:8px 8px;background-position:0 0,4px 4px;"></div>
<div class="abs" style="left:1505.4px;top:326.4px;width:133.5px;height:25.6px;background:linear-gradient(90deg,rgba(255,10,50,1) 0%,rgba(255,10,50,.72) 30%,rgba(255,10,50,.3) 65%,rgba(255,10,50,0) 100%);"></div>
<svg style="left:1643.6px;top:337.6px;" width="8.4" height="5.4" viewBox="0 0 8.4 5.4"><path d="M0.6 0.6 L4.2 4.3 L7.8 0.6" stroke="#c8c8c8" stroke-width="1.2" fill="none"/></svg>
<span class="t" style="left:1398.3px;top:403.60px;height:19px;line-height:19px;font-size:13.5px;color:#e4e4e4;transform:scaleX(0.9600);"><u>T</u>echnique:</span>
<div class="inp" style="left:1470px;top:403.7px;width:72.6px;height:21.8px;border-color:#5e5e5e"></div>
<span class="t" style="left:1480.5px;top:405.00px;height:19px;line-height:19px;font-size:13.5px;color:#f0f0f0;transform:scaleX(0.9297);">Softer</span>
<svg style="left:1530.4px;top:412.8px;" width="8.4" height="5.4" viewBox="0 0 8.4 5.4"><path d="M0.6 0.6 L4.2 4.3 L7.8 0.6" stroke="#c8c8c8" stroke-width="1.2" fill="none"/></svg>
<span class="t" style="left:1418.3px;top:431.10px;height:19px;line-height:19px;font-size:13.5px;color:#e4e4e4;transform:scaleX(0.9025);">S<u>p</u>read:</span>
<div class="abs" style="left:1476.6px;top:435.40000000000003px;width:119px;height:2.4px;background:#747474;border-radius:1.2px;"></div><svg style="left:1471.6px;top:438.1px;" width="13" height="13.5" viewBox="0 0 13 13.5"><path d="M6.5 0.3 L12.3 8.2 C13.2 9.8 12.6 12.9 10 12.9 H3 C0.4 12.9 -0.2 9.8 0.7 8.2 Z" fill="#f4f4f4" stroke="#3c3c3c" stroke-width="0.6"/></svg>
<div class="inp" style="left:1607.5px;top:430.9px;width:50.8px;height:20.1px"></div>
<span class="t" style="left:1612.3px;top:431.30px;height:19px;line-height:19px;font-size:13.5px;color:#f0f0f0;transform:scaleX(0.9048);">2</span>
<span class="t" style="left:1664.3px;top:431.50px;height:19px;line-height:19px;font-size:13.5px;color:#e4e4e4;transform:scaleX(0.8655);">%</span>
<span class="t" style="left:1434.1px;top:458.00px;height:19px;line-height:19px;font-size:13.5px;color:#e4e4e4;transform:scaleX(0.8957);"><u>S</u>ize:</span>
<div class="abs" style="left:1476.6px;top:462.6px;width:119px;height:2.4px;background:#747474;border-radius:1.2px;"></div><svg style="left:1482.9px;top:465.3px;" width="13" height="13.5" viewBox="0 0 13 13.5"><path d="M6.5 0.3 L12.3 8.2 C13.2 9.8 12.6 12.9 10 12.9 H3 C0.4 12.9 -0.2 9.8 0.7 8.2 Z" fill="#f4f4f4" stroke="#3c3c3c" stroke-width="0.6"/></svg>
<div class="inp" style="left:1607.5px;top:457.8px;width:50.8px;height:20.1px"></div>
<span class="t" style="left:1612.3px;top:458.20px;height:19px;line-height:19px;font-size:13.5px;color:#f0f0f0;transform:scaleX(0.9314);">12</span>
<span class="t" style="left:1663.7px;top:459.50px;height:19px;line-height:19px;font-size:13.5px;color:#e4e4e4;transform:scaleX(0.8762);">px</span>
<span class="t" style="left:1414.7px;top:538.30px;height:19px;line-height:19px;font-size:13.5px;color:#e4e4e4;transform:scaleX(0.8941);">Contour:</span>
<div class="abs" style="left:1471.4px;top:527.6px;width:57px;height:43.2px;background:#454545;border:1px solid #5c5c5c;border-radius:2px;"></div>
<svg style="left:1472.4px;top:528.6px;" width="40.4" height="41.4" viewBox="0 0 40.4 41.4"><rect width="40.4" height="41.4" fill="#464646"/><path d="M0 0 H40.4 L0 41.4 Z" fill="#ffffff"/></svg>
<div class="abs" style="left:1513.2px;top:528.6px;width:1px;height:41.2px;background:#5c5c5c;"></div>
<svg style="left:1516.8px;top:547.6px;" width="8.4" height="5.4" viewBox="0 0 8.4 5.4"><path d="M0.6 0.6 L4.2 4.3 L7.8 0.6" stroke="#c8c8c8" stroke-width="1.2" fill="none"/></svg>
<div class="cb" style="left:1543.8px;top:542.3px;width:12.4px;height:12.4px"></div>
<span class="t" style="left:1562.7px;top:538.30px;height:19px;line-height:19px;font-size:13.5px;color:#e4e4e4;transform:scaleX(0.9098);">Anti-a<u>l</u>iased</span>
<span class="t" style="left:1421.3px;top:577.20px;height:19px;line-height:19px;font-size:13.5px;color:#e4e4e4;transform:scaleX(0.8979);"><u>R</u>ange:</span>
<div class="abs" style="left:1476.6px;top:581.8px;width:119px;height:2.4px;background:#747474;border-radius:1.2px;"></div><svg style="left:1529.3px;top:584.5px;" width="13" height="13.5" viewBox="0 0 13 13.5"><path d="M6.5 0.3 L12.3 8.2 C13.2 9.8 12.6 12.9 10 12.9 H3 C0.4 12.9 -0.2 9.8 0.7 8.2 Z" fill="#f4f4f4" stroke="#3c3c3c" stroke-width="0.6"/></svg>
<div class="inp" style="left:1607.5px;top:577px;width:50.8px;height:20.1px"></div>
<span class="t" style="left:1612.3px;top:577.40px;height:19px;line-height:19px;font-size:13.5px;color:#f0f0f0;transform:scaleX(0.9447);">50</span>
<span class="t" style="left:1664.3px;top:577.60px;height:19px;line-height:19px;font-size:13.5px;color:#e4e4e4;transform:scaleX(0.8655);">%</span>
<span class="t" style="left:1431.2px;top:604.70px;height:19px;line-height:19px;font-size:13.5px;color:#e4e4e4;transform:scaleX(0.9329);"><u>J</u>itter:</span>
<div class="abs" style="left:1476.6px;top:609.3px;width:119px;height:2.4px;background:#747474;border-radius:1.2px;"></div><svg style="left:1468.9px;top:612.0px;" width="13" height="13.5" viewBox="0 0 13 13.5"><path d="M6.5 0.3 L12.3 8.2 C13.2 9.8 12.6 12.9 10 12.9 H3 C0.4 12.9 -0.2 9.8 0.7 8.2 Z" fill="#f4f4f4" stroke="#3c3c3c" stroke-width="0.6"/></svg>
<div class="inp" style="left:1607.5px;top:604.2px;width:50.8px;height:20.1px"></div>
<span class="t" style="left:1612.3px;top:604.60px;height:19px;line-height:19px;font-size:13.5px;color:#f0f0f0;transform:scaleX(0.8782);">0</span>
<span class="t" style="left:1664.3px;top:604.80px;height:19px;line-height:19px;font-size:13.5px;color:#e4e4e4;transform:scaleX(0.8655);">%</span>
<div class="btn" style="left:1470px;top:645.4px;width:103.1px;height:26.9px;border-color:#5e5e5e"></div>
<span class="t" style="left:1485.5px;top:649.20px;height:19px;line-height:19px;font-size:13.5px;color:#f0f0f0;transform:scaleX(0.9215);">Make Default</span>
<div class="btn" style="left:1585.7px;top:645.4px;width:120.4px;height:26.9px;border-color:#5e5e5e"></div>
<span class="t" style="left:1601.5px;top:649.20px;height:19px;line-height:19px;font-size:13.5px;color:#f0f0f0;transform:scaleX(0.9327);">Reset to Default</span>
</body>
</html>
